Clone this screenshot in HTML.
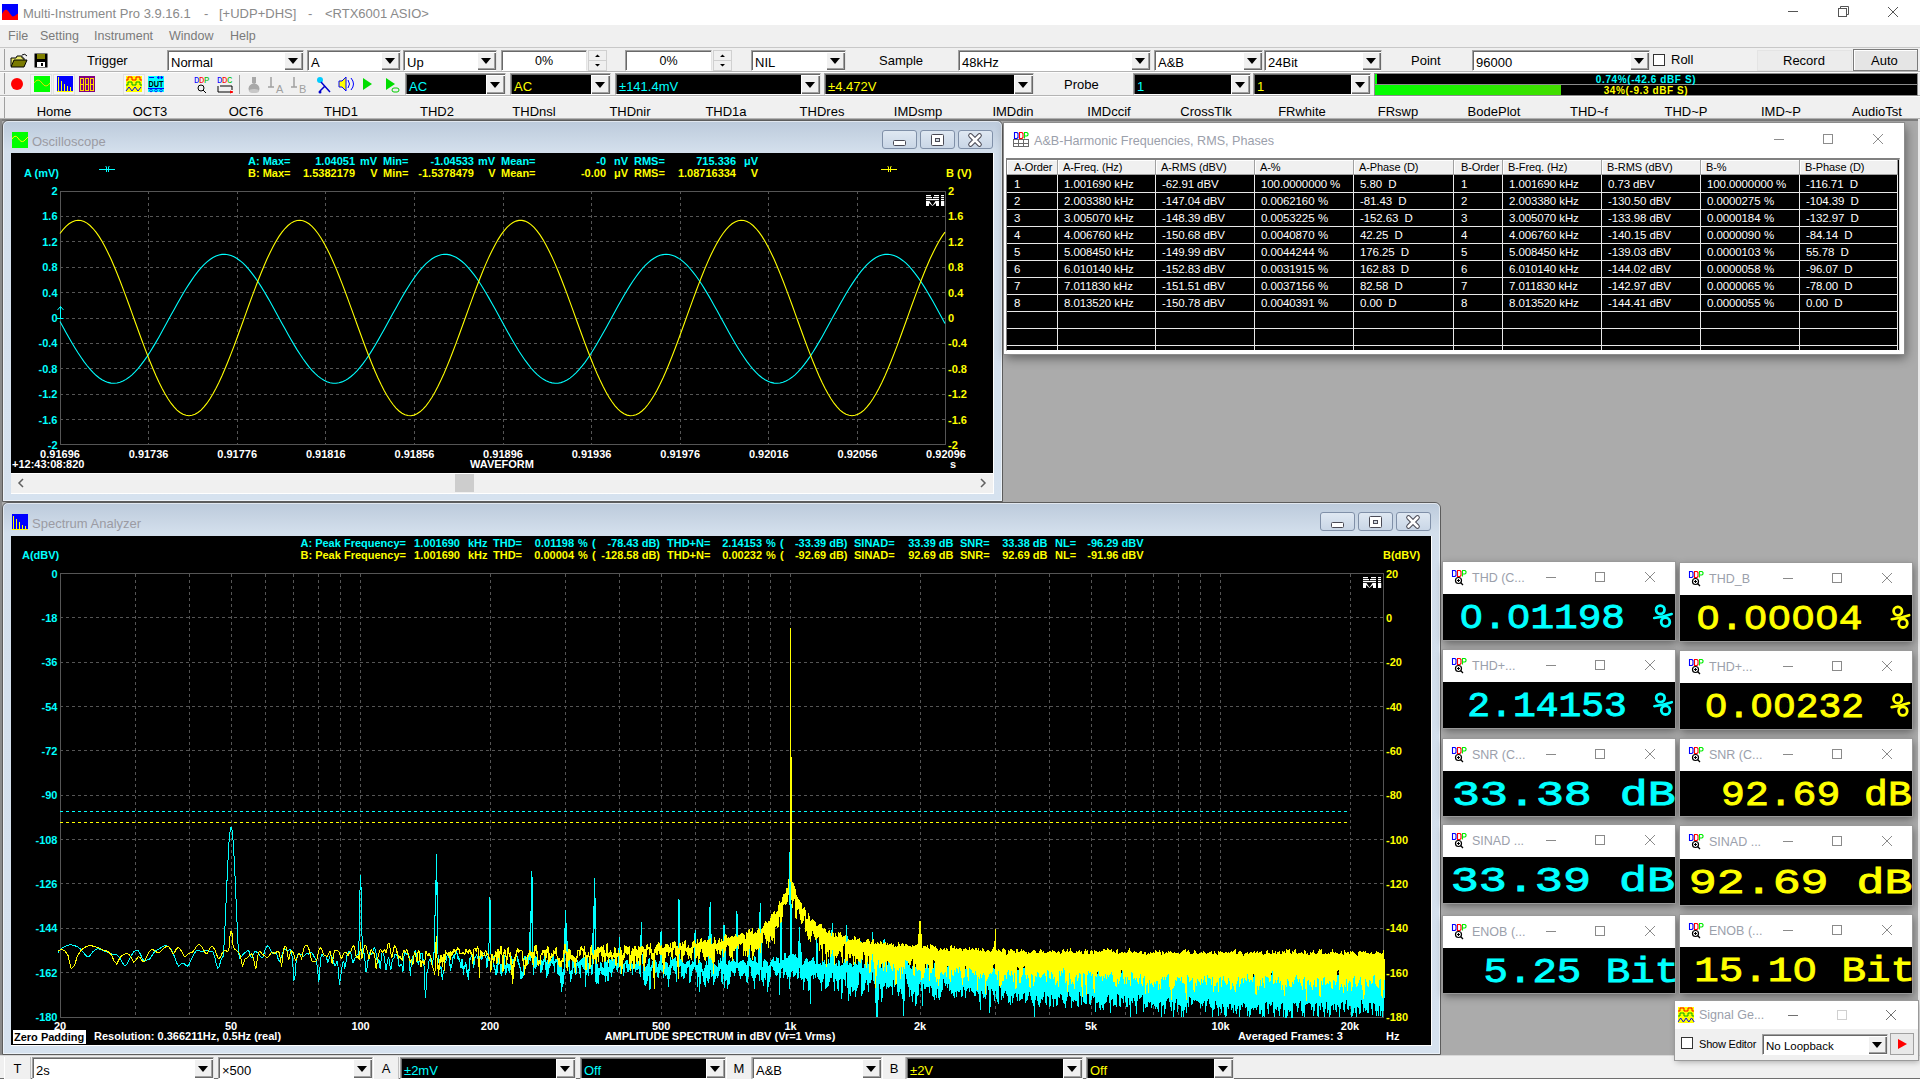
<!DOCTYPE html><html><head><meta charset="utf-8"><style>
*{margin:0;padding:0;box-sizing:border-box}
html,body{width:1920px;height:1079px;overflow:hidden;background:#ababab;font-family:"Liberation Sans",sans-serif;}
.a{position:absolute}
.t{position:absolute;white-space:pre;line-height:1}
.cb{position:absolute;background:#fff;border-top:1px solid #a0a0a0;border-left:1px solid #a0a0a0;border-bottom:1px solid #fff;border-right:1px solid #e3e3e3;box-shadow:inset 1px 1px 0 #696969}
.cbk{position:absolute;background:#000;border-top:1px solid #a0a0a0;border-left:1px solid #a0a0a0;border-bottom:1px solid #fff;border-right:1px solid #e3e3e3;box-shadow:inset 1px 1px 0 #696969}
.dd{position:absolute;top:1px;bottom:0;right:0;width:19px;background:#f0f0f0;box-shadow:inset 1px 1px 0 #fff,inset -1px -1px 0 #696969,inset -2px -2px 0 #a0a0a0}
.dd:after{content:"";position:absolute;left:4px;top:50%;margin-top:-3px;border-left:5px solid transparent;border-right:5px solid transparent;border-top:6px solid #000}
.ui{font-size:12px;color:#000}
.bold{font-weight:bold}
</style></head><body><div class="a" style="left:0px;top:0px;width:1920px;height:25px;background:#fff"></div><svg class="a" style="left:2px;top:4px" width="16" height="16"><rect width="16" height="16" fill="#0000ff"/><path d="M0 16 V10 C1.5 7 3 5 5 6 C7 7.5 9 12 11 12.5 C13 12.5 14.5 10 16 9.5 V16 Z" fill="#ff0000"/></svg><div class="t" style="left:23px;top:7px;font-size:13px;color:#8a8a8a">Multi-Instrument Pro 3.9.16.1</div><div class="t" style="left:204px;top:7px;font-size:13px;color:#8a8a8a">-</div><div class="t" style="left:219px;top:7px;font-size:13px;color:#8a8a8a">[+UDP+DHS]</div><div class="t" style="left:308px;top:7px;font-size:13px;color:#8a8a8a">-</div><div class="t" style="left:325px;top:7px;font-size:13px;color:#8a8a8a">&lt;RTX6001 ASIO&gt;</div><svg class="a" style="left:1780px;top:0" width="140" height="25"><path d="M8 11.5 H18" stroke="#555" stroke-width="1"/><rect x="58.5" y="8.5" width="8" height="8" fill="none" stroke="#555"/><path d="M60.5 8.5 V6.5 H68.5 V14.5 H66.5" fill="none" stroke="#555"/><path d="M108 7 L118 17 M118 7 L108 17" stroke="#555" stroke-width="1"/></svg><div class="a" style="left:0px;top:25px;width:1920px;height:22px;background:#f0f0f0"></div><div class="t" style="left:8px;top:30px;font-size:12.5px;color:#7a7a7a">File</div><div class="t" style="left:40px;top:30px;font-size:12.5px;color:#7a7a7a">Setting</div><div class="t" style="left:94px;top:30px;font-size:12.5px;color:#7a7a7a">Instrument</div><div class="t" style="left:169px;top:30px;font-size:12.5px;color:#7a7a7a">Window</div><div class="t" style="left:230px;top:30px;font-size:12.5px;color:#7a7a7a">Help</div><div class="a" style="left:0px;top:47px;width:1920px;height:1px;background:#c8c8c8"></div><div class="a" style="left:0px;top:48px;width:1920px;height:71px;background:#f0f0f0"></div><div class="a" style="left:0px;top:71px;width:1920px;height:1px;background:#b4b4b4"></div><div class="a" style="left:0px;top:72px;width:1920px;height:1px;background:#fdfdfd"></div><div class="a" style="left:0px;top:95px;width:1920px;height:1px;background:#b4b4b4"></div><div class="a" style="left:0px;top:96px;width:1920px;height:1px;background:#fdfdfd"></div><div class="a" style="left:0px;top:118px;width:1920px;height:1px;background:#b4b4b4"></div><div class="a" style="left:0px;top:119px;width:1920px;height:1px;background:#fdfdfd"></div><div class="a" style="left:4px;top:49px;width:1px;height:21px;background:#a0a0a0"></div><div class="a" style="left:4px;top:73px;width:1px;height:21px;background:#a0a0a0"></div><div class="a" style="left:4px;top:97px;width:1px;height:21px;background:#a0a0a0"></div><svg class="a" style="left:10px;top:52px" width="40" height="17"><path d="M1 6 H6 L7 4 H12 V6 H14 V14 H1 Z" fill="#e8e86a" stroke="#000" stroke-width="1"/><path d="M1 15 L4 8 H17 L14 15 Z" fill="#7a7a00" stroke="#000" stroke-width="1"/><path d="M12 3 Q15 1 17 4" fill="none" stroke="#000"/><rect x="24.5" y="1.5" width="13" height="14" fill="#000"/><rect x="27" y="2" width="8" height="5" fill="#808000"/><rect x="27" y="10" width="8" height="5" fill="#fff"/><rect x="31" y="11" width="2" height="3" fill="#000"/></svg><div class="t" style="left:87px;top:54px;font-size:13px;color:#000">Trigger</div><div class="cb" style="left:167px;top:50px;width:137px;height:21px"><div class="t" style="left:3px;top:5.0px;font-size:13px;color:#000">Normal</div><div class="dd"></div></div><div class="cb" style="left:307px;top:50px;width:94px;height:21px"><div class="t" style="left:3px;top:5.0px;font-size:13px;color:#000">A</div><div class="dd"></div></div><div class="cb" style="left:403px;top:50px;width:94px;height:21px"><div class="t" style="left:3px;top:5.0px;font-size:13px;color:#000">Up</div><div class="dd"></div></div><div class="cb" style="left:501px;top:50px;width:86px;height:21px"><div class="t" style="left:0;width:84px;text-align:center;top:4px;font-size:12.5px">0%</div></div><svg class="a" style="left:588px;top:50px" width="19" height="21"><rect x="0.5" y="0.5" width="18" height="10" fill="#f0f0f0" stroke="#d0d0d0"/><rect x="0.5" y="10.5" width="18" height="10" fill="#f0f0f0" stroke="#d0d0d0"/><path d="M7 7 L9.5 4.5 L12 7Z M7 14 L9.5 16.5 L12 14Z" fill="#000"/></svg><div class="cb" style="left:625px;top:50px;width:87px;height:21px"><div class="t" style="left:0;width:85px;text-align:center;top:4px;font-size:12.5px">0%</div></div><svg class="a" style="left:713px;top:50px" width="19" height="21"><rect x="0.5" y="0.5" width="18" height="10" fill="#f0f0f0" stroke="#d0d0d0"/><rect x="0.5" y="10.5" width="18" height="10" fill="#f0f0f0" stroke="#d0d0d0"/><path d="M7 7 L9.5 4.5 L12 7Z M7 14 L9.5 16.5 L12 14Z" fill="#000"/></svg><div class="cb" style="left:751px;top:50px;width:95px;height:21px"><div class="t" style="left:3px;top:5.0px;font-size:13px;color:#000">NIL</div><div class="dd"></div></div><div class="t" style="left:879px;top:54px;font-size:13px;color:#000">Sample</div><div class="cb" style="left:958px;top:50px;width:193px;height:21px"><div class="t" style="left:3px;top:5.0px;font-size:13px;color:#000">48kHz</div><div class="dd"></div></div><div class="cb" style="left:1154px;top:50px;width:109px;height:21px"><div class="t" style="left:3px;top:5.0px;font-size:13px;color:#000">A&amp;B</div><div class="dd"></div></div><div class="cb" style="left:1264px;top:50px;width:118px;height:21px"><div class="t" style="left:3px;top:5.0px;font-size:13px;color:#000">24Bit</div><div class="dd"></div></div><div class="t" style="left:1411px;top:54px;font-size:13px;color:#000">Point</div><div class="cb" style="left:1472px;top:50px;width:178px;height:21px"><div class="t" style="left:3px;top:5.0px;font-size:13px;color:#000">96000</div><div class="dd"></div></div><div class="a" style="left:1653px;top:54px;width:12px;height:12px;background:#fff;border:1px solid #333"></div><div class="t" style="left:1671px;top:53px;font-size:13px;color:#000">Roll</div><div class="a" style="left:1757px;top:50px;width:95px;height:21px;background:#ececec;border:1px solid #e4e4e4"></div><div class="t" style="left:1783px;top:54px;font-size:13px;color:#000">Record</div><div class="a" style="left:1853px;top:49px;width:65px;height:22px;background:#e5e5e5;border:1px solid #7a7a7a;box-shadow:inset 1px 1px 0 #fff"></div><div class="t" style="left:1871px;top:54px;font-size:13px;color:#000">Auto</div><svg class="a" style="left:0;top:73px" width="405" height="23"><circle cx="17" cy="11" r="6" fill="#ff0000"/><rect x="30.5" y="1.5" width="21" height="20" fill="#f5f5f5" stroke="#e0e0e0"/><rect x="53.5" y="1.5" width="21" height="20" fill="#f5f5f5" stroke="#e0e0e0"/><rect x="34" y="3" width="16" height="16" fill="#00ff00"/><path d="M34 10 Q38 4 42 10 Q46 16 50 10" fill="none" stroke="#e0e000" stroke-width="1"/><rect x="57" y="3" width="16" height="16" fill="#0000ff"/><path d="M58.5 4 V18 M61.5 8 V18 M64.5 11 V18 M67.5 13 V18 M70.5 14 V18 M57 18.5 H73" stroke="#ffff00" stroke-width="1"/><rect x="79" y="3" width="16" height="16" fill="#800080"/><path d="M80.5 5.5 h3 v12 h-3 z M80.5 11.5 h3 M85.5 5.5 h3 v12 h-3 z M85.5 11.5 h3 M90.5 5.5 h3 v12 h-3 z M90.5 11.5 h3" fill="none" stroke="#ffd700" stroke-width="1" shape-rendering="crispEdges"/><rect x="123.5" y="1.5" width="21" height="20" fill="#f5f5f5" stroke="#e0e0e0"/><rect x="126" y="3" width="16" height="16" fill="#ffff00"/><path d="M126 7 h2 v-3 h4 v3 h4 v-3 h4 v3 h2" fill="none" stroke="#ff0000"/><path d="M126 12 h2 v-3 h4 v3 h4 v-3 h4 v3 h2" fill="none" stroke="#00aa00"/><path d="M126 18 l3 -4 l3 4 l3 -4 l3 4 l3 -4" fill="none" stroke="#0000ff"/><rect x="148" y="3" width="16" height="16" fill="#00ffff"/><path d="M149 4.5 h5 M157 4.5 l2 -1 v2 z M163 4.5 l-2 -1 v2z" stroke="#0000ff" fill="#0000ff" stroke-width="1"/><text x="148.5" y="13.5" font-family="Liberation Sans" font-weight="bold" font-size="8.5" fill="#000" textLength="15" lengthAdjust="spacingAndGlyphs">DUT</text><path d="M148 15.5 h16" stroke="#0000ff"/><circle cx="151" cy="17.5" r="1.3" fill="none" stroke="#0000ff" stroke-width="0.8"/><circle cx="156" cy="17.5" r="1.3" fill="none" stroke="#0000ff" stroke-width="0.8"/><circle cx="161" cy="17.5" r="1.3" fill="none" stroke="#0000ff" stroke-width="0.8"/><text x="194" y="10" font-family="Liberation Mono" font-size="9" fill="#0000ff">D</text><text x="199" y="10" font-family="Liberation Mono" font-size="9" fill="#ff0000">D</text><text x="204" y="10" font-family="Liberation Mono" font-size="9" fill="#00bb00">P</text><circle cx="201" cy="15" r="3" fill="none" stroke="#000"/><path d="M203 17 l3 3" stroke="#000"/><text x="217" y="10" font-family="Liberation Mono" font-size="9" fill="#0000ff">D</text><text x="222" y="10" font-family="Liberation Mono" font-size="9" fill="#ff0000">D</text><text x="227" y="10" font-family="Liberation Mono" font-size="9" fill="#00bb00">C</text><path d="M218 13 v6 h14 M220 13 h12 v4" fill="none" stroke="#000"/><path d="M230 18 l3 1 l-3 1" fill="#ff0000" stroke="#ff0000"/><rect x="239" y="2" width="1" height="19" fill="#a0a0a0"/><path d="M249 18 Q247 12 254 10 Q261 12 259 18 Z" fill="#a8a8a8"/><rect x="252" y="4" width="4" height="6" fill="#a8a8a8"/><ellipse cx="254" cy="18" rx="5" ry="2" fill="#c8c8c8"/><path d="M271 4 v10 M268 14 h6" stroke="#a0a0a0" stroke-width="1.5"/><text x="276" y="20" font-family="Liberation Sans" font-size="11" fill="#a0a0a0">A</text><path d="M294 4 v10 M291 14 h6" stroke="#a0a0a0" stroke-width="1.5"/><text x="299" y="20" font-family="Liberation Sans" font-size="11" fill="#a0a0a0">B</text><circle cx="320" cy="7" r="3" fill="#00ccff"/><path d="M321 9 L330 19 M325 13 L320 18" stroke="#0000cc" stroke-width="1.5"/><circle cx="320" cy="19" r="1.5" fill="#0000cc"/><path d="M339 8 h3 l4 -4 v14 l-4 -4 h-3 z" fill="#ffff00" stroke="#0000ff"/><path d="M348 7 q3 4 0 8 M351 5 q5 6 0 12" fill="none" stroke="#0000ff"/><path d="M363 5 L372 11 L363 17 Z" fill="#00dd00"/><path d="M386 5 L395 11 L386 17 Z" fill="#00dd00"/><rect x="392" y="15" width="7" height="4" rx="2" fill="none" stroke="#00cc00"/></svg><div class="cbk" style="left:405px;top:73px;width:101px;height:22px"><div class="t" style="left:3px;top:5.5px;font-size:13px;color:#00ffff">AC</div><div class="dd"></div></div><div class="cbk" style="left:510px;top:73px;width:101px;height:22px"><div class="t" style="left:3px;top:5.5px;font-size:13px;color:#ffff00">AC</div><div class="dd"></div></div><div class="cbk" style="left:615px;top:73px;width:206px;height:22px"><div class="t" style="left:3px;top:5.5px;font-size:13px;color:#00ffff">±141.4mV</div><div class="dd"></div></div><div class="cbk" style="left:824px;top:73px;width:210px;height:22px"><div class="t" style="left:3px;top:5.5px;font-size:13px;color:#ffff00">±4.472V</div><div class="dd"></div></div><div class="t" style="left:1064px;top:78px;font-size:13px;color:#000">Probe</div><div class="cbk" style="left:1133px;top:73px;width:118px;height:22px"><div class="t" style="left:3px;top:5.5px;font-size:13px;color:#00ffff">1</div><div class="dd"></div></div><div class="cbk" style="left:1253px;top:73px;width:118px;height:22px"><div class="t" style="left:3px;top:5.5px;font-size:13px;color:#ffff00">1</div><div class="dd"></div></div><div class="a" style="left:1374px;top:73px;width:544px;height:23px;background:#000;border:1px solid #8c8c8c"></div><div class="a" style="left:1375px;top:84px;width:542px;height:1px;background:#8c8c8c"></div><div class="a" style="left:1375px;top:74px;width:2px;height:10px;background:#00ff00"></div><div class="a" style="left:1375px;top:85px;width:186px;height:10px;background:linear-gradient(90deg,#00ff00,#44dd00)"></div><div class="t" style="left:1374px;top:75px;width:544px;text-align:center;font-size:10px;letter-spacing:0.6px;font-weight:bold;color:#00ffff">0.74%(-42.6 dBF S)</div><div class="t" style="left:1374px;top:86px;width:544px;text-align:center;font-size:10px;letter-spacing:0.6px;font-weight:bold;color:#ffff00">34%(-9.3 dBF S)</div><div class="t" style="left:4px;top:105px;width:100px;text-align:center;font-size:13px;color:#000">Home</div><div class="t" style="left:100px;top:105px;width:100px;text-align:center;font-size:13px;color:#000">OCT3</div><div class="t" style="left:196px;top:105px;width:100px;text-align:center;font-size:13px;color:#000">OCT6</div><div class="t" style="left:291px;top:105px;width:100px;text-align:center;font-size:13px;color:#000">THD1</div><div class="t" style="left:387px;top:105px;width:100px;text-align:center;font-size:13px;color:#000">THD2</div><div class="t" style="left:484px;top:105px;width:100px;text-align:center;font-size:13px;color:#000">THDnsl</div><div class="t" style="left:580px;top:105px;width:100px;text-align:center;font-size:13px;color:#000">THDnir</div><div class="t" style="left:676px;top:105px;width:100px;text-align:center;font-size:13px;color:#000">THD1a</div><div class="t" style="left:772px;top:105px;width:100px;text-align:center;font-size:13px;color:#000">THDres</div><div class="t" style="left:868px;top:105px;width:100px;text-align:center;font-size:13px;color:#000">IMDsmp</div><div class="t" style="left:963px;top:105px;width:100px;text-align:center;font-size:13px;color:#000">IMDdin</div><div class="t" style="left:1059px;top:105px;width:100px;text-align:center;font-size:13px;color:#000">IMDccif</div><div class="t" style="left:1156px;top:105px;width:100px;text-align:center;font-size:13px;color:#000">CrossTlk</div><div class="t" style="left:1252px;top:105px;width:100px;text-align:center;font-size:13px;color:#000">FRwhite</div><div class="t" style="left:1348px;top:105px;width:100px;text-align:center;font-size:13px;color:#000">FRswp</div><div class="t" style="left:1444px;top:105px;width:100px;text-align:center;font-size:13px;color:#000">BodePlot</div><div class="t" style="left:1539px;top:105px;width:100px;text-align:center;font-size:13px;color:#000">THD~f</div><div class="t" style="left:1636px;top:105px;width:100px;text-align:center;font-size:13px;color:#000">THD~P</div><div class="t" style="left:1731px;top:105px;width:100px;text-align:center;font-size:13px;color:#000">IMD~P</div><div class="t" style="left:1827px;top:105px;width:100px;text-align:center;font-size:13px;color:#000">AudioTst</div><div class="a" style="left:0px;top:119px;width:1920px;height:936px;background:#ababab"></div><div class="a" style="left:0px;top:119px;width:1920px;height:2px;background:#7c7c7c"></div><div class="a" style="left:0px;top:119px;width:2px;height:936px;background:#8a8a8a"></div><div class="a" style="left:1918px;top:119px;width:2px;height:936px;background:#e8e8e8"></div><div class="a" style="left:2px;top:120px;width:1001px;height:382px;background:linear-gradient(180deg,#bccadb 0px,#d3dfec 30px,#d6e2ef 100%);border:1px solid #5c5c5c;border-radius:6px 6px 0 0"></div><div class="a" style="left:3px;top:121px;width:999px;height:380px;border:1px solid rgba(255,255,255,0.55);border-radius:5px 5px 0 0"></div><svg class="a" style="left:12px;top:132px" width="16" height="16"><rect width="16" height="16" fill="#00ff00"/><path d="M0 7 Q3 2 6 6 Q9 11 12 9 L16 5" fill="none" stroke="#ffff00" stroke-width="1"/></svg><div class="t" style="left:32px;top:135px;font-size:13px;color:#9b9ba3">Oscilloscope</div><div class="a" style="left:958px;top:130px;width:35px;height:19px;border:1px solid #8090a8;border-radius:3px;background:linear-gradient(180deg,#dfe8f2,#c9d6e6)"></div><svg class="a" style="left:966px;top:131px" width="18" height="18"><path d="M4.5 4.5 L13.5 13.5 M13.5 4.5 L4.5 13.5" stroke="#4a4a55" stroke-width="4.6" stroke-linecap="round"/><path d="M4.5 4.5 L13.5 13.5 M13.5 4.5 L4.5 13.5" stroke="#fff" stroke-width="2.6" stroke-linecap="round"/></svg><div class="a" style="left:920px;top:130px;width:35px;height:19px;border:1px solid #8090a8;border-radius:3px;background:linear-gradient(180deg,#dfe8f2,#c9d6e6)"></div><svg class="a" style="left:928px;top:131px" width="18" height="18"><rect x="3.5" y="3.5" width="12" height="11" rx="1" fill="#fff" stroke="#4a4a55" stroke-width="1"/><rect x="7.5" y="7.5" width="4" height="3" fill="#d0d8e0" stroke="#4a4a55"/></svg><div class="a" style="left:882px;top:130px;width:35px;height:19px;border:1px solid #8090a8;border-radius:3px;background:linear-gradient(180deg,#dfe8f2,#c9d6e6)"></div><svg class="a" style="left:890px;top:131px" width="18" height="18"><rect x="3.5" y="9.5" width="12" height="5" rx="1" fill="#fff" stroke="#4a4a55" stroke-width="1"/></svg><div class="a" style="left:11px;top:153px;width:982px;height:320px;background:#000"></div><div class="a" style="left:11px;top:473px;width:982px;height:20px;background:#f0f0f0;border-top:1px solid #fff"></div><svg class="a" style="left:11px;top:473px" width="982" height="20"><path d="M12 6 L8 10 L12 14" fill="none" stroke="#606060" stroke-width="1.5"/><path d="M970 6 L974 10 L970 14" fill="none" stroke="#606060" stroke-width="1.5"/><rect x="444" y="1" width="19" height="18" fill="#cdcdcd"/></svg><div class="a" style="left:993px;top:153px;width:1px;height:341px;background:#fff"></div><div class="a" style="left:11px;top:493px;width:983px;height:1px;background:#fff"></div><div class="a" style="left:2px;top:502px;width:1439px;height:553px;background:linear-gradient(180deg,#bccadb 0px,#d3dfec 30px,#d6e2ef 100%);border:1px solid #5c5c5c;border-radius:6px 6px 0 0"></div><div class="a" style="left:3px;top:503px;width:1437px;height:551px;border:1px solid rgba(255,255,255,0.55);border-radius:5px 5px 0 0"></div><svg class="a" style="left:12px;top:514px" width="16" height="16"><rect width="16" height="16" fill="#0000ff"/><path d="M1.5 2 V15 M4.5 5 V15 M7.5 8 V15 M10.5 11 V15 M13.5 12 V15 M0 15.5 H16" stroke="#ffff00" stroke-width="1"/></svg><div class="t" style="left:32px;top:517px;font-size:13px;color:#9b9ba3">Spectrum Analyzer</div><div class="a" style="left:1396px;top:512px;width:35px;height:19px;border:1px solid #8090a8;border-radius:3px;background:linear-gradient(180deg,#dfe8f2,#c9d6e6)"></div><svg class="a" style="left:1404px;top:513px" width="18" height="18"><path d="M4.5 4.5 L13.5 13.5 M13.5 4.5 L4.5 13.5" stroke="#4a4a55" stroke-width="4.6" stroke-linecap="round"/><path d="M4.5 4.5 L13.5 13.5 M13.5 4.5 L4.5 13.5" stroke="#fff" stroke-width="2.6" stroke-linecap="round"/></svg><div class="a" style="left:1358px;top:512px;width:35px;height:19px;border:1px solid #8090a8;border-radius:3px;background:linear-gradient(180deg,#dfe8f2,#c9d6e6)"></div><svg class="a" style="left:1366px;top:513px" width="18" height="18"><rect x="3.5" y="3.5" width="12" height="11" rx="1" fill="#fff" stroke="#4a4a55" stroke-width="1"/><rect x="7.5" y="7.5" width="4" height="3" fill="#d0d8e0" stroke="#4a4a55"/></svg><div class="a" style="left:1320px;top:512px;width:35px;height:19px;border:1px solid #8090a8;border-radius:3px;background:linear-gradient(180deg,#dfe8f2,#c9d6e6)"></div><svg class="a" style="left:1328px;top:513px" width="18" height="18"><rect x="3.5" y="9.5" width="12" height="5" rx="1" fill="#fff" stroke="#4a4a55" stroke-width="1"/></svg><div class="a" style="left:11px;top:536px;width:1420px;height:509px;background:#000"></div><div class="a" style="left:11px;top:1045px;width:1421px;height:1px;background:#fff"></div><div class="a" style="left:1431px;top:536px;width:1px;height:510px;background:#fff"></div><div class="a" style="left:0px;top:1055px;width:1920px;height:24px;background:#f0f0f0"></div><div class="a" style="left:0px;top:1055px;width:1920px;height:1px;background:#d8d8d8"></div><div class="a" style="left:0px;top:1078px;width:1920px;height:1px;background:#6e6e6e"></div><svg class="a" style="left:0;top:0" width="1920" height="1079" font-family="Liberation Sans"><path d="M148.6 191 V445 M237.2 191 V445 M325.8 191 V445 M414.4 191 V445 M503.0 191 V445 M591.6 191 V445 M680.2 191 V445 M768.8 191 V445 M857.4 191 V445 M60 216.4 H946 M60 241.8 H946 M60 267.2 H946 M60 292.6 H946 M60 318.0 H946 M60 343.4 H946 M60 368.8 H946 M60 394.2 H946 M60 419.6 H946" stroke="#555555" stroke-width="1" stroke-dasharray="3 3" fill="none" shape-rendering="crispEdges"/><rect x="60.5" y="191.5" width="885" height="253" fill="none" stroke="#555555" stroke-width="1" shape-rendering="crispEdges"/><text x="57.5" y="195.0" fill="#00ffff" text-anchor="end" font-size="11" font-weight="bold" >2</text><text x="948" y="195.0" fill="#ffff00" text-anchor="start" font-size="11" font-weight="bold" >2</text><text x="57.5" y="220.4" fill="#00ffff" text-anchor="end" font-size="11" font-weight="bold" >1.6</text><text x="948" y="220.4" fill="#ffff00" text-anchor="start" font-size="11" font-weight="bold" >1.6</text><text x="57.5" y="245.8" fill="#00ffff" text-anchor="end" font-size="11" font-weight="bold" >1.2</text><text x="948" y="245.8" fill="#ffff00" text-anchor="start" font-size="11" font-weight="bold" >1.2</text><text x="57.5" y="271.2" fill="#00ffff" text-anchor="end" font-size="11" font-weight="bold" >0.8</text><text x="948" y="271.2" fill="#ffff00" text-anchor="start" font-size="11" font-weight="bold" >0.8</text><text x="57.5" y="296.6" fill="#00ffff" text-anchor="end" font-size="11" font-weight="bold" >0.4</text><text x="948" y="296.6" fill="#ffff00" text-anchor="start" font-size="11" font-weight="bold" >0.4</text><text x="57.5" y="322.0" fill="#00ffff" text-anchor="end" font-size="11" font-weight="bold" >0</text><text x="948" y="322.0" fill="#ffff00" text-anchor="start" font-size="11" font-weight="bold" >0</text><text x="57.5" y="347.4" fill="#00ffff" text-anchor="end" font-size="11" font-weight="bold" >-0.4</text><text x="948" y="347.4" fill="#ffff00" text-anchor="start" font-size="11" font-weight="bold" >-0.4</text><text x="57.5" y="372.8" fill="#00ffff" text-anchor="end" font-size="11" font-weight="bold" >-0.8</text><text x="948" y="372.8" fill="#ffff00" text-anchor="start" font-size="11" font-weight="bold" >-0.8</text><text x="57.5" y="398.2" fill="#00ffff" text-anchor="end" font-size="11" font-weight="bold" >-1.2</text><text x="948" y="398.2" fill="#ffff00" text-anchor="start" font-size="11" font-weight="bold" >-1.2</text><text x="57.5" y="423.6" fill="#00ffff" text-anchor="end" font-size="11" font-weight="bold" >-1.6</text><text x="948" y="423.6" fill="#ffff00" text-anchor="start" font-size="11" font-weight="bold" >-1.6</text><text x="57.5" y="449.0" fill="#00ffff" text-anchor="end" font-size="11" font-weight="bold" >-2</text><text x="948" y="449.0" fill="#ffff00" text-anchor="start" font-size="11" font-weight="bold" >-2</text><text x="60.0" y="458" fill="#ffffff" text-anchor="middle" font-size="11" font-weight="bold" >0.91696</text><text x="148.6" y="458" fill="#ffffff" text-anchor="middle" font-size="11" font-weight="bold" >0.91736</text><text x="237.2" y="458" fill="#ffffff" text-anchor="middle" font-size="11" font-weight="bold" >0.91776</text><text x="325.8" y="458" fill="#ffffff" text-anchor="middle" font-size="11" font-weight="bold" >0.91816</text><text x="414.4" y="458" fill="#ffffff" text-anchor="middle" font-size="11" font-weight="bold" >0.91856</text><text x="503.0" y="458" fill="#ffffff" text-anchor="middle" font-size="11" font-weight="bold" >0.91896</text><text x="591.6" y="458" fill="#ffffff" text-anchor="middle" font-size="11" font-weight="bold" >0.91936</text><text x="680.2" y="458" fill="#ffffff" text-anchor="middle" font-size="11" font-weight="bold" >0.91976</text><text x="768.8" y="458" fill="#ffffff" text-anchor="middle" font-size="11" font-weight="bold" >0.92016</text><text x="857.4" y="458" fill="#ffffff" text-anchor="middle" font-size="11" font-weight="bold" >0.92056</text><text x="946.0" y="458" fill="#ffffff" text-anchor="middle" font-size="11" font-weight="bold" >0.92096</text><text x="12" y="468" fill="#ffffff" text-anchor="start" font-size="11" font-weight="bold" >+12:43:08:820</text><text x="502" y="468" fill="#ffffff" text-anchor="middle" font-size="11" font-weight="bold" >WAVEFORM</text><text x="950" y="468" fill="#ffffff" text-anchor="start" font-size="11" font-weight="bold" >s</text><text x="24" y="177" fill="#00ffff" text-anchor="start" font-size="11" font-weight="bold" >A (mV)</text><text x="946" y="177" fill="#ffff00" text-anchor="start" font-size="11" font-weight="bold" >B (V)</text><text x="248" y="165" fill="#00ffff" text-anchor="start" font-size="11" font-weight="bold" >A: Max=</text><text x="355" y="165" fill="#00ffff" text-anchor="end" font-size="11" font-weight="bold" >1.04051</text><text x="360" y="165" fill="#00ffff" text-anchor="start" font-size="11" font-weight="bold" >mV</text><text x="383" y="165" fill="#00ffff" text-anchor="start" font-size="11" font-weight="bold" >Min=</text><text x="474" y="165" fill="#00ffff" text-anchor="end" font-size="11" font-weight="bold" >-1.04533</text><text x="478" y="165" fill="#00ffff" text-anchor="start" font-size="11" font-weight="bold" >mV</text><text x="501" y="165" fill="#00ffff" text-anchor="start" font-size="11" font-weight="bold" >Mean=</text><text x="606" y="165" fill="#00ffff" text-anchor="end" font-size="11" font-weight="bold" >-0</text><text x="614" y="165" fill="#00ffff" text-anchor="start" font-size="11" font-weight="bold" >nV</text><text x="634" y="165" fill="#00ffff" text-anchor="start" font-size="11" font-weight="bold" >RMS=</text><text x="736" y="165" fill="#00ffff" text-anchor="end" font-size="11" font-weight="bold" >715.336</text><text x="744" y="165" fill="#00ffff" text-anchor="start" font-size="11" font-weight="bold" >μV</text><text x="248" y="177" fill="#ffff00" text-anchor="start" font-size="11" font-weight="bold" >B: Max=</text><text x="355" y="177" fill="#ffff00" text-anchor="end" font-size="11" font-weight="bold" >1.5382179</text><text x="377.5" y="177" fill="#ffff00" text-anchor="end" font-size="11" font-weight="bold" >V</text><text x="383" y="177" fill="#ffff00" text-anchor="start" font-size="11" font-weight="bold" >Min=</text><text x="474" y="177" fill="#ffff00" text-anchor="end" font-size="11" font-weight="bold" >-1.5378479</text><text x="495.5" y="177" fill="#ffff00" text-anchor="end" font-size="11" font-weight="bold" >V</text><text x="501" y="177" fill="#ffff00" text-anchor="start" font-size="11" font-weight="bold" >Mean=</text><text x="606" y="177" fill="#ffff00" text-anchor="end" font-size="11" font-weight="bold" >-0.00</text><text x="614" y="177" fill="#ffff00" text-anchor="start" font-size="11" font-weight="bold" >μV</text><text x="634" y="177" fill="#ffff00" text-anchor="start" font-size="11" font-weight="bold" >RMS=</text><text x="736" y="177" fill="#ffff00" text-anchor="end" font-size="11" font-weight="bold" >1.08716334</text><text x="758" y="177" fill="#ffff00" text-anchor="end" font-size="11" font-weight="bold" >V</text><path d="M99 169.5 H115 M106.5 167 V172 M108.5 167 V172 M105.5 166 L106.5 167 M109.5 166 L108.5 167" stroke="#00ffff" stroke-width="1" fill="none"/><path d="M881 169.5 H897 M888.5 167 V172 M890.5 167 V172 M887.5 166 L888.5 167 M891.5 166 L890.5 167" stroke="#ffff00" stroke-width="1" fill="none"/><rect x="926" y="195" width="5" height="1.2" fill="#fff"/><rect x="934" y="195" width="5" height="1.2" fill="#fff"/><rect x="941" y="195" width="3" height="1.2" fill="#fff"/><rect x="926" y="197" width="6" height="1.2" fill="#fff"/><rect x="933" y="197" width="6" height="1.2" fill="#fff"/><rect x="941" y="197" width="3" height="1.2" fill="#fff"/><rect x="926" y="199" width="13" height="1.2" fill="#fff"/><rect x="941" y="199" width="3" height="1.2" fill="#fff"/><path d="M926 201 h3.5 l3 4.5 l3 -4.5 h3.5 v5 h-3 v-3 l-3.5 3 l-3.5 -3 v3 h-3 z" fill="#fff"/><rect x="941" y="201" width="3.2" height="5" fill="#fff"/><polyline points="60.0,321.5 63.0,327.0 66.0,332.4 69.0,337.8 72.0,343.0 75.0,348.0 78.0,352.8 81.0,357.3 84.0,361.6 87.0,365.5 90.0,369.1 93.0,372.4 96.0,375.3 99.0,377.7 102.0,379.7 105.0,381.3 108.0,382.4 111.0,383.1 114.0,383.3 117.0,383.0 120.0,382.3 123.0,381.1 126.0,379.4 129.0,377.3 132.0,374.8 135.0,371.9 138.0,368.6 141.0,364.9 144.0,360.9 147.0,356.6 150.0,352.0 153.0,347.1 156.0,342.1 159.0,336.9 162.0,331.6 165.0,326.1 168.0,320.6 171.0,315.1 174.0,309.7 177.0,304.3 180.0,299.0 183.0,293.8 186.0,288.8 189.0,284.1 192.0,279.6 195.0,275.3 198.0,271.4 201.0,267.9 204.0,264.7 207.0,261.9 210.0,259.5 213.0,257.6 216.0,256.1 219.0,255.0 222.0,254.4 225.0,254.3 228.0,254.7 231.0,255.5 234.0,256.8 237.0,258.5 240.0,260.7 243.0,263.2 246.0,266.2 249.0,269.6 252.0,273.4 255.0,277.4 258.0,281.8 261.0,286.4 264.0,291.3 267.0,296.4 270.0,301.6 273.0,306.9 276.0,312.4 279.0,317.9 282.0,323.4 285.0,328.8 288.0,334.2 291.0,339.5 294.0,344.6 297.0,349.6 300.0,354.3 303.0,358.8 306.0,362.9 309.0,366.8 312.0,370.3 315.0,373.4 318.0,376.1 321.0,378.4 324.0,380.3 327.0,381.7 330.0,382.7 333.0,383.2 336.0,383.3 339.0,382.8 342.0,381.9 345.0,380.6 348.0,378.8 351.0,376.5 354.0,373.9 357.0,370.8 360.0,367.4 363.0,363.6 366.0,359.5 369.0,355.1 372.0,350.4 375.0,345.5 378.0,340.4 381.0,335.1 384.0,329.7 387.0,324.3 390.0,318.8 393.0,313.3 396.0,307.9 399.0,302.5 402.0,297.2 405.0,292.1 408.0,287.2 411.0,282.5 414.0,278.1 417.0,274.0 420.0,270.2 423.0,266.8 426.0,263.7 429.0,261.1 432.0,258.8 435.0,257.0 438.0,255.7 441.0,254.8 444.0,254.3 447.0,254.4 450.0,254.9 453.0,255.9 456.0,257.3 459.0,259.2 462.0,261.5 465.0,264.2 468.0,267.3 471.0,270.8 474.0,274.7 477.0,278.8 480.0,283.3 483.0,288.0 486.0,293.0 489.0,298.1 492.0,303.4 495.0,308.8 498.0,314.2 501.0,319.7 504.0,325.2 507.0,330.7 510.0,336.0 513.0,341.2 516.0,346.3 519.0,351.2 522.0,355.8 525.0,360.2 528.0,364.2 531.0,368.0 534.0,371.4 537.0,374.4 540.0,376.9 543.0,379.1 546.0,380.8 549.0,382.1 552.0,382.9 555.0,383.3 558.0,383.2 561.0,382.6 564.0,381.5 567.0,380.0 570.0,378.1 573.0,375.7 576.0,372.9 579.0,369.7 582.0,366.2 585.0,362.3 588.0,358.0 591.0,353.5 594.0,348.8 597.0,343.8 600.0,338.6 603.0,333.3 606.0,327.9 609.0,322.5 612.0,317.0 615.0,311.5 618.0,306.0 621.0,300.7 624.0,295.5 627.0,290.5 630.0,285.6 633.0,281.0 636.0,276.7 639.0,272.7 642.0,269.0 645.0,265.7 648.0,262.8 651.0,260.3 654.0,258.2 657.0,256.5 660.0,255.3 663.0,254.6 666.0,254.3 669.0,254.5 672.0,255.2 675.0,256.3 678.0,257.9 681.0,259.9 684.0,262.3 687.0,265.2 690.0,268.5 693.0,272.1 696.0,276.0 699.0,280.3 702.0,284.8 705.0,289.6 708.0,294.6 711.0,299.8 714.0,305.2 717.0,310.6 720.0,316.1 723.0,321.5 726.0,327.0 729.0,332.4 732.0,337.8 735.0,343.0 738.0,348.0 741.0,352.8 744.0,357.3 747.0,361.6 750.0,365.5 753.0,369.1 756.0,372.4 759.0,375.3 762.0,377.7 765.0,379.7 768.0,381.3 771.0,382.4 774.0,383.1 777.0,383.3 780.0,383.0 783.0,382.3 786.0,381.1 789.0,379.4 792.0,377.3 795.0,374.8 798.0,371.9 801.0,368.6 804.0,364.9 807.0,360.9 810.0,356.6 813.0,352.0 816.0,347.1 819.0,342.1 822.0,336.9 825.0,331.6 828.0,326.1 831.0,320.6 834.0,315.1 837.0,309.7 840.0,304.3 843.0,299.0 846.0,293.8 849.0,288.8 852.0,284.1 855.0,279.6 858.0,275.3 861.0,271.4 864.0,267.9 867.0,264.7 870.0,261.9 873.0,259.5 876.0,257.6 879.0,256.1 882.0,255.0 885.0,254.4 888.0,254.3 891.0,254.7 894.0,255.5 897.0,256.8 900.0,258.5 903.0,260.7 906.0,263.2 909.0,266.2 912.0,269.6 915.0,273.4 918.0,277.4 921.0,281.8 924.0,286.4 927.0,291.3 930.0,296.4 933.0,301.6 936.0,306.9 939.0,312.4 942.0,317.9 945.0,323.4" fill="none" stroke="#00ffff" stroke-width="1.1"/><polyline points="60.0,233.5 63.0,229.6 66.0,226.4 69.0,223.8 72.0,222.0 75.0,220.8 78.0,220.3 81.0,220.5 84.0,221.5 87.0,223.1 90.0,225.5 93.0,228.5 96.0,232.1 99.0,236.4 102.0,241.3 105.0,246.7 108.0,252.7 111.0,259.1 114.0,266.0 117.0,273.2 120.0,280.8 123.0,288.6 126.0,296.6 129.0,304.8 132.0,313.1 135.0,321.5 138.0,329.8 141.0,338.0 144.0,346.1 147.0,353.9 150.0,361.5 153.0,368.8 156.0,375.8 159.0,382.3 162.0,388.3 165.0,393.8 168.0,398.8 171.0,403.2 174.0,406.9 177.0,410.1 180.0,412.5 183.0,414.3 186.0,415.3 189.0,415.7 192.0,415.3 195.0,414.3 198.0,412.5 201.0,410.1 204.0,406.9 207.0,403.2 210.0,398.8 213.0,393.8 216.0,388.3 219.0,382.3 222.0,375.8 225.0,368.8 228.0,361.5 231.0,353.9 234.0,346.1 237.0,338.0 240.0,329.8 243.0,321.5 246.0,313.1 249.0,304.8 252.0,296.6 255.0,288.6 258.0,280.8 261.0,273.2 264.0,266.0 267.0,259.1 270.0,252.7 273.0,246.7 276.0,241.3 279.0,236.4 282.0,232.1 285.0,228.5 288.0,225.5 291.0,223.1 294.0,221.5 297.0,220.5 300.0,220.3 303.0,220.8 306.0,222.0 309.0,223.8 312.0,226.4 315.0,229.6 318.0,233.5 321.0,238.0 324.0,243.1 327.0,248.7 330.0,254.8 333.0,261.4 336.0,268.4 339.0,275.7 342.0,283.4 345.0,291.3 348.0,299.4 351.0,307.6 354.0,315.9 357.0,324.2 360.0,332.5 363.0,340.7 366.0,348.7 369.0,356.5 372.0,364.0 375.0,371.2 378.0,378.0 381.0,384.3 384.0,390.2 387.0,395.5 390.0,400.3 393.0,404.5 396.0,408.1 399.0,411.0 402.0,413.2 405.0,414.7 408.0,415.5 411.0,415.7 414.0,415.1 417.0,413.8 420.0,411.8 423.0,409.1 426.0,405.8 429.0,401.8 432.0,397.2 435.0,392.0 438.0,386.3 441.0,380.1 444.0,373.5 447.0,366.4 450.0,359.0 453.0,351.3 456.0,343.4 459.0,335.3 462.0,327.0 465.0,318.7 468.0,310.4 471.0,302.1 474.0,293.9 477.0,286.0 480.0,278.2 483.0,270.8 486.0,263.6 489.0,256.9 492.0,250.7 495.0,244.9 498.0,239.6 501.0,234.9 504.0,230.9 507.0,227.4 510.0,224.6 513.0,222.5 516.0,221.1 519.0,220.4 522.0,220.4 525.0,221.1 528.0,222.5 531.0,224.6 534.0,227.4 537.0,230.9 540.0,234.9 543.0,239.6 546.0,244.9 549.0,250.7 552.0,256.9 555.0,263.6 558.0,270.8 561.0,278.2 564.0,286.0 567.0,293.9 570.0,302.1 573.0,310.4 576.0,318.7 579.0,327.0 582.0,335.3 585.0,343.4 588.0,351.3 591.0,359.0 594.0,366.4 597.0,373.5 600.0,380.1 603.0,386.3 606.0,392.0 609.0,397.2 612.0,401.8 615.0,405.8 618.0,409.1 621.0,411.8 624.0,413.8 627.0,415.1 630.0,415.7 633.0,415.5 636.0,414.7 639.0,413.2 642.0,411.0 645.0,408.1 648.0,404.5 651.0,400.3 654.0,395.5 657.0,390.2 660.0,384.3 663.0,378.0 666.0,371.2 669.0,364.0 672.0,356.5 675.0,348.7 678.0,340.7 681.0,332.5 684.0,324.2 687.0,315.9 690.0,307.6 693.0,299.4 696.0,291.3 699.0,283.4 702.0,275.7 705.0,268.4 708.0,261.4 711.0,254.8 714.0,248.7 717.0,243.1 720.0,238.0 723.0,233.5 726.0,229.6 729.0,226.4 732.0,223.8 735.0,222.0 738.0,220.8 741.0,220.3 744.0,220.5 747.0,221.5 750.0,223.1 753.0,225.5 756.0,228.5 759.0,232.1 762.0,236.4 765.0,241.3 768.0,246.7 771.0,252.7 774.0,259.1 777.0,266.0 780.0,273.2 783.0,280.8 786.0,288.6 789.0,296.6 792.0,304.8 795.0,313.1 798.0,321.5 801.0,329.8 804.0,338.0 807.0,346.1 810.0,353.9 813.0,361.5 816.0,368.8 819.0,375.8 822.0,382.3 825.0,388.3 828.0,393.8 831.0,398.8 834.0,403.2 837.0,406.9 840.0,410.1 843.0,412.5 846.0,414.3 849.0,415.3 852.0,415.7 855.0,415.3 858.0,414.3 861.0,412.5 864.0,410.1 867.0,406.9 870.0,403.2 873.0,398.8 876.0,393.8 879.0,388.3 882.0,382.3 885.0,375.8 888.0,368.8 891.0,361.5 894.0,353.9 897.0,346.1 900.0,338.0 903.0,329.8 906.0,321.5 909.0,313.1 912.0,304.8 915.0,296.6 918.0,288.6 921.0,280.8 924.0,273.2 927.0,266.0 930.0,259.1 933.0,252.7 936.0,246.7 939.0,241.3 942.0,236.4 945.0,232.1" fill="none" stroke="#ffff00" stroke-width="1.1"/><path d="M60.5 318.5 V306.5 M57.5 310 L60.5 306.5 L63.5 310 M57 318.5 H63.5" fill="none" stroke="#00ffff" stroke-width="1"/></svg><svg class="a" style="left:0;top:0" width="1920" height="1079" font-family="Liberation Sans"><path d="M135.5 573.5 V1017 M189.5 573.5 V1017 M231.5 573.5 V1017 M265.5 573.5 V1017 M293.5 573.5 V1017 M318.5 573.5 V1017 M340.5 573.5 V1017 M360.5 573.5 V1017 M490.5 573.5 V1017 M565.5 573.5 V1017 M619.5 573.5 V1017 M661.5 573.5 V1017 M695.5 573.5 V1017 M723.5 573.5 V1017 M748.5 573.5 V1017 M770.5 573.5 V1017 M790.5 573.5 V1017 M920.5 573.5 V1017 M995.5 573.5 V1017 M1049.5 573.5 V1017 M1091.5 573.5 V1017 M1125.5 573.5 V1017 M1153.5 573.5 V1017 M1178.5 573.5 V1017 M1200.5 573.5 V1017 M1220.5 573.5 V1017 M1350.5 573.5 V1017 M60 617.5 H1383.5 M60 662.5 H1383.5 M60 706.5 H1383.5 M60 750.5 H1383.5 M60 795.5 H1383.5 M60 839.5 H1383.5 M60 883.5 H1383.5 M60 928.5 H1383.5 M60 972.5 H1383.5" stroke="#555555" stroke-width="1" stroke-dasharray="3 3" fill="none" shape-rendering="crispEdges"/><rect x="60.5" y="573.5" width="1322.5" height="444" fill="none" stroke="#555555" stroke-width="1" shape-rendering="crispEdges"/><path d="M60 811.5 H1350" stroke="#00ffff" stroke-dasharray="3 3" shape-rendering="crispEdges"/><path d="M60 822.5 H1350" stroke="#ffff00" stroke-dasharray="3 3" shape-rendering="crispEdges"/><text x="57.5" y="577.5" fill="#00ffff" text-anchor="end" font-size="11" font-weight="bold" >0</text><text x="1386" y="577.5" fill="#ffff00" text-anchor="start" font-size="11" font-weight="bold" >20</text><text x="57.5" y="621.85" fill="#00ffff" text-anchor="end" font-size="11" font-weight="bold" >-18</text><text x="1386" y="621.85" fill="#ffff00" text-anchor="start" font-size="11" font-weight="bold" >0</text><text x="57.5" y="666.2" fill="#00ffff" text-anchor="end" font-size="11" font-weight="bold" >-36</text><text x="1386" y="666.2" fill="#ffff00" text-anchor="start" font-size="11" font-weight="bold" >-20</text><text x="57.5" y="710.55" fill="#00ffff" text-anchor="end" font-size="11" font-weight="bold" >-54</text><text x="1386" y="710.55" fill="#ffff00" text-anchor="start" font-size="11" font-weight="bold" >-40</text><text x="57.5" y="754.9" fill="#00ffff" text-anchor="end" font-size="11" font-weight="bold" >-72</text><text x="1386" y="754.9" fill="#ffff00" text-anchor="start" font-size="11" font-weight="bold" >-60</text><text x="57.5" y="799.25" fill="#00ffff" text-anchor="end" font-size="11" font-weight="bold" >-90</text><text x="1386" y="799.25" fill="#ffff00" text-anchor="start" font-size="11" font-weight="bold" >-80</text><text x="57.5" y="843.6" fill="#00ffff" text-anchor="end" font-size="11" font-weight="bold" >-108</text><text x="1386" y="843.6" fill="#ffff00" text-anchor="start" font-size="11" font-weight="bold" >-100</text><text x="57.5" y="887.95" fill="#00ffff" text-anchor="end" font-size="11" font-weight="bold" >-126</text><text x="1386" y="887.95" fill="#ffff00" text-anchor="start" font-size="11" font-weight="bold" >-120</text><text x="57.5" y="932.3" fill="#00ffff" text-anchor="end" font-size="11" font-weight="bold" >-144</text><text x="1386" y="932.3" fill="#ffff00" text-anchor="start" font-size="11" font-weight="bold" >-140</text><text x="57.5" y="976.65" fill="#00ffff" text-anchor="end" font-size="11" font-weight="bold" >-162</text><text x="1386" y="976.65" fill="#ffff00" text-anchor="start" font-size="11" font-weight="bold" >-160</text><text x="57.5" y="1021.0" fill="#00ffff" text-anchor="end" font-size="11" font-weight="bold" >-180</text><text x="1386" y="1021.0" fill="#ffff00" text-anchor="start" font-size="11" font-weight="bold" >-180</text><text x="60.0" y="1030" fill="#ffffff" text-anchor="middle" font-size="11" font-weight="bold" >20</text><text x="231.11420372897618" y="1030" fill="#ffffff" text-anchor="middle" font-size="11" font-weight="bold" >50</text><text x="360.5571018644881" y="1030" fill="#ffffff" text-anchor="middle" font-size="11" font-weight="bold" >100</text><text x="490.0" y="1030" fill="#ffffff" text-anchor="middle" font-size="11" font-weight="bold" >200</text><text x="661.1142037289762" y="1030" fill="#ffffff" text-anchor="middle" font-size="11" font-weight="bold" >500</text><text x="790.557101864488" y="1030" fill="#ffffff" text-anchor="middle" font-size="11" font-weight="bold" >1k</text><text x="920.0" y="1030" fill="#ffffff" text-anchor="middle" font-size="11" font-weight="bold" >2k</text><text x="1091.114203728976" y="1030" fill="#ffffff" text-anchor="middle" font-size="11" font-weight="bold" >5k</text><text x="1220.557101864488" y="1030" fill="#ffffff" text-anchor="middle" font-size="11" font-weight="bold" >10k</text><text x="1350.0" y="1030" fill="#ffffff" text-anchor="middle" font-size="11" font-weight="bold" >20k</text><text x="22" y="559" fill="#00ffff" text-anchor="start" font-size="11" font-weight="bold" >A(dBV)</text><text x="1383" y="559" fill="#ffff00" text-anchor="start" font-size="11" font-weight="bold" >B(dBV)</text><rect x="13" y="1030" width="73" height="14" fill="#fff"/><text x="14" y="1041" fill="#000" text-anchor="start" font-size="11" font-weight="bold" >Zero Padding</text><text x="94" y="1040" fill="#ffffff" text-anchor="start" font-size="11" font-weight="bold" >Resolution: 0.366211Hz, 0.5Hz (real)</text><text x="720" y="1040" fill="#ffffff" text-anchor="middle" font-size="11" font-weight="bold" >AMPLITUDE SPECTRUM in dBV (Vr=1 Vrms)</text><text x="1238" y="1040" fill="#ffffff" text-anchor="start" font-size="11" font-weight="bold" >Averaged Frames: 3</text><text x="1386" y="1040" fill="#ffffff" text-anchor="start" font-size="11" font-weight="bold" >Hz</text><rect x="1363" y="577" width="5" height="1.2" fill="#fff"/><rect x="1371" y="577" width="5" height="1.2" fill="#fff"/><rect x="1378" y="577" width="3" height="1.2" fill="#fff"/><rect x="1363" y="579" width="6" height="1.2" fill="#fff"/><rect x="1370" y="579" width="6" height="1.2" fill="#fff"/><rect x="1378" y="579" width="3" height="1.2" fill="#fff"/><rect x="1363" y="581" width="13" height="1.2" fill="#fff"/><rect x="1378" y="581" width="3" height="1.2" fill="#fff"/><path d="M1363 583 h3.5 l3 4.5 l3 -4.5 h3.5 v5 h-3 v-3 l-3.5 3 l-3.5 -3 v3 h-3 z" fill="#fff"/><rect x="1378" y="583" width="3.2" height="5" fill="#fff"/><text x="300.5" y="547" fill="#00ffff" text-anchor="start" font-size="11" font-weight="bold" >A: Peak Frequency=</text><text x="460" y="547" fill="#00ffff" text-anchor="end" font-size="11" font-weight="bold" >1.001690</text><text x="468" y="547" fill="#00ffff" text-anchor="start" font-size="11" font-weight="bold" >kHz</text><text x="493" y="547" fill="#00ffff" text-anchor="start" font-size="11" font-weight="bold" >THD=</text><text x="574" y="547" fill="#00ffff" text-anchor="end" font-size="11" font-weight="bold" >0.01198</text><text x="578" y="547" fill="#00ffff" text-anchor="start" font-size="11" font-weight="bold" >%</text><text x="592" y="547" fill="#00ffff" text-anchor="start" font-size="11" font-weight="bold" >(</text><text x="660" y="547" fill="#00ffff" text-anchor="end" font-size="11" font-weight="bold" >-78.43 dB)</text><text x="667" y="547" fill="#00ffff" text-anchor="start" font-size="11" font-weight="bold" >THD+N=</text><text x="762" y="547" fill="#00ffff" text-anchor="end" font-size="11" font-weight="bold" >2.14153</text><text x="766" y="547" fill="#00ffff" text-anchor="start" font-size="11" font-weight="bold" >%</text><text x="780" y="547" fill="#00ffff" text-anchor="start" font-size="11" font-weight="bold" >(</text><text x="847.5" y="547" fill="#00ffff" text-anchor="end" font-size="11" font-weight="bold" >-33.39 dB)</text><text x="854" y="547" fill="#00ffff" text-anchor="start" font-size="11" font-weight="bold" >SINAD=</text><text x="953.5" y="547" fill="#00ffff" text-anchor="end" font-size="11" font-weight="bold" >33.39 dB</text><text x="960" y="547" fill="#00ffff" text-anchor="start" font-size="11" font-weight="bold" >SNR=</text><text x="1047.5" y="547" fill="#00ffff" text-anchor="end" font-size="11" font-weight="bold" >33.38 dB</text><text x="1055" y="547" fill="#00ffff" text-anchor="start" font-size="11" font-weight="bold" >NL=</text><text x="1143.5" y="547" fill="#00ffff" text-anchor="end" font-size="11" font-weight="bold" >-96.29 dBV</text><text x="300.5" y="559" fill="#ffff00" text-anchor="start" font-size="11" font-weight="bold" >B: Peak Frequency=</text><text x="460" y="559" fill="#ffff00" text-anchor="end" font-size="11" font-weight="bold" >1.001690</text><text x="468" y="559" fill="#ffff00" text-anchor="start" font-size="11" font-weight="bold" >kHz</text><text x="493" y="559" fill="#ffff00" text-anchor="start" font-size="11" font-weight="bold" >THD=</text><text x="574" y="559" fill="#ffff00" text-anchor="end" font-size="11" font-weight="bold" >0.00004</text><text x="578" y="559" fill="#ffff00" text-anchor="start" font-size="11" font-weight="bold" >%</text><text x="592" y="559" fill="#ffff00" text-anchor="start" font-size="11" font-weight="bold" >(</text><text x="660" y="559" fill="#ffff00" text-anchor="end" font-size="11" font-weight="bold" >-128.58 dB)</text><text x="667" y="559" fill="#ffff00" text-anchor="start" font-size="11" font-weight="bold" >THD+N=</text><text x="762" y="559" fill="#ffff00" text-anchor="end" font-size="11" font-weight="bold" >0.00232</text><text x="766" y="559" fill="#ffff00" text-anchor="start" font-size="11" font-weight="bold" >%</text><text x="780" y="559" fill="#ffff00" text-anchor="start" font-size="11" font-weight="bold" >(</text><text x="847.5" y="559" fill="#ffff00" text-anchor="end" font-size="11" font-weight="bold" >-92.69 dB)</text><text x="854" y="559" fill="#ffff00" text-anchor="start" font-size="11" font-weight="bold" >SINAD=</text><text x="953.5" y="559" fill="#ffff00" text-anchor="end" font-size="11" font-weight="bold" >92.69 dB</text><text x="960" y="559" fill="#ffff00" text-anchor="start" font-size="11" font-weight="bold" >SNR=</text><text x="1047.5" y="559" fill="#ffff00" text-anchor="end" font-size="11" font-weight="bold" >92.69 dB</text><text x="1055" y="559" fill="#ffff00" text-anchor="start" font-size="11" font-weight="bold" >NL=</text><text x="1143.5" y="559" fill="#ffff00" text-anchor="end" font-size="11" font-weight="bold" >-91.96 dBV</text><path d="M57.9 952.6 L61.3 948.7 L64.7 946.4 L68.0 945.1 L71.2 944.9 L74.4 945.5 L77.6 946.9 L80.7 949.2 L83.7 952.8 L86.7 956.4 L89.6 956.0 L92.5 952.2 L95.4 949.5 L98.2 948.6 L100.9 949.4 L103.7 950.8 L106.4 951.7 L109.0 952.6 L111.6 953.8 L114.2 954.5 L116.7 955.0 L119.2 957.0 L121.7 961.2 L124.2 965.5 L126.6 964.8 L128.9 960.6 L131.3 955.8 L133.6 951.9 L135.9 950.2 L138.2 950.7 L140.4 954.1 L142.6 959.3 L144.8 960.9 L147.0 959.9 L149.1 959.4 L151.2 956.9 L153.3 953.3 L155.3 951.1 L157.4 950.0 L159.4 948.8 L161.4 947.4 L163.4 946.2 L165.3 945.7 L167.3 946.1 L169.2 947.3 L171.1 949.5 L173.0 952.7 L174.8 957.7 L176.7 963.0 L178.5 966.1 L180.3 964.9 L182.1 963.1 L183.8 963.2 L185.6 965.0 L187.3 966.3 L189.1 964.3 L190.8 960.5 L192.5 956.9 L194.1 953.7 L195.8 951.3 L197.4 950.2 L199.1 950.6 L200.7 951.5 L202.3 951.7 L203.9 951.1 L205.4 950.8 L207.0 950.9 L208.6 951.1 L210.1 951.0 L211.6 951.0 L213.1 952.3 L214.6 956.3 L216.1 963.0 L217.6 968.5 L219.1 966.8 L220.5 961.7 L222.0 957.9 L223.4 955.8 L224.8 930.8 L226.2 898.8 L227.6 867.5 L229.0 842.3 L230.4 828.0 L231.8 827.5 L233.1 840.6 L234.5 864.3 L235.8 893.8 L237.1 924.3 L238.4 951.8 L239.8 958.0 L241.1 957.0 L242.3 955.3 L243.6 953.7 L244.9 952.8 L246.2 951.8 L247.4 950.8 L248.7 951.0 L249.9 953.3 L251.2 957.7 L252.4 957.4 L253.6 953.4 L254.8 951.6 L256.0 951.5 L257.2 952.4 L258.4 953.6 L259.6 955.2 L260.7 956.9 L261.9 958.0 L263.1 956.6 L264.2 952.8 L265.3 949.3 L266.5 946.8 L267.6 945.8 L268.7 946.5 L269.8 948.6 L271.0 951.2 L272.1 952.9 L273.1 953.2 L274.2 952.8 L275.3 952.6 L276.4 953.6 L277.5 956.7 L278.5 960.2 L279.6 961.2 L280.6 959.4 L281.7 956.2 L282.7 952.8 L283.8 950.3 L284.8 949.0 L285.8 949.3 L286.8 950.5 L287.8 951.0 L288.9 950.1 L289.9 949.5 L290.8 950.7 L291.8 954.2 L292.8 963.3 L293.8 979.9 L294.8 978.6 L295.8 964.9 L296.7 958.0 L297.7 954.9 L298.6 954.3 L299.6 954.7 L300.5 954.8 L301.5 954.8 L302.4 955.5 L303.3 956.1 L304.3 955.8 L305.2 954.8 L306.1 953.7 L307.0 953.0 L307.9 953.3 L308.8 954.2 L309.7 953.9 L310.6 952.7 L311.5 952.3 L312.4 953.3 L313.3 955.0 L314.2 956.9 L315.0 958.0 L315.9 959.9 L316.8 963.1 L317.6 968.6 L318.5 980.8 L319.4 979.1 L320.2 963.1 L321.1 955.8 L321.9 954.3 L322.7 955.3 L323.6 956.5 L324.4 955.9 L325.2 955.2 L326.1 956.2 L326.9 959.1 L327.7 961.7 L328.5 960.8 L329.3 958.0 L330.1 955.8 L330.9 955.1 L331.7 956.2 L332.5 958.7 L333.3 961.3 L334.1 963.7 L334.9 965.8 L335.7 964.7 L336.5 961.9 L337.2 961.8 L338.0 966.4 L338.8 976.6 L339.5 984.5 L340.3 979.0 L341.1 973.3 L341.8 968.0 L342.6 963.5 L343.3 961.5 L344.1 963.3 L344.8 967.7 L345.6 965.9 L346.3 958.9 L347.0 954.6 L347.8 953.1 L348.5 952.1 L349.2 951.3 L350.0 951.3 L350.7 952.5 L351.4 955.1 L352.1 959.3 L352.8 962.4 L353.5 962.0 L354.3 959.7 L355.0 958.1 L355.7 957.2 L356.4 956.2 L357.1 954.8 L357.8 954.0 L358.4 954.6 L359.1 938.7 L359.8 895.8 L360.5 875.1 L361.2 891.1 L361.9 932.0 L362.6 955.6 L363.2 953.2 L363.9 953.1 L364.6 955.8 L365.2 963.3 L365.9 971.7 L366.6 971.7 L367.2 966.5 L367.9 961.5 L368.5 956.7 L369.2 953.8 L369.9 952.3 L370.5 952.3 L371.1 953.3 L371.8 954.4 L372.4 953.5 L373.1 950.8 L373.7 948.4 L374.4 947.7 L375.0 948.7 L375.6 950.9 L376.2 954.1 L376.9 958.7 L377.5 963.6 L378.1 962.9 L378.7 959.9 L379.4 961.0 L380.0 967.8 L380.6 968.7 L381.2 958.2 L381.8 953.5 L382.4 952.5 L383.0 953.2 L383.6 954.8 L384.2 956.8 L384.8 960.8 L385.4 965.9 L386.0 970.0 L386.6 967.6 L387.2 962.4 L387.8 959.1 L388.4 957.9 L389.0 958.8 L389.6 962.3 L390.2 967.7 L390.8 970.4 L391.3 966.9 L391.9 962.1 L392.5 959.5 L393.1 959.1 L393.6 958.9 L394.2 957.2 L394.5 955 L395.5 954 L396.5 954 L397.5 958 397.5 955 L398.5 963 398.5 965 L399.5 966 L400.5 965 400.5 964 L401.5 964 L402.5 968 402.5 972 L403.5 969 403.5 961 L404.5 952 404.5 955 L405.5 953 405.5 952 L406.5 954 L407.5 954 L408.5 955 L409.5 958 409.5 965 L410.5 976 410.5 975 L411.5 960 411.5 967 L412.5 956 L413.5 956 L414.5 954 414.5 952 L415.5 951 L416.5 955 416.5 957 L417.5 963 417.5 960 L418.5 965 L419.5 958 419.5 962 L420.5 956 420.5 954 L421.5 953 L422.5 953 422.5 955 L423.5 965 423.5 959 L424.5 973 424.5 982 L425.5 998 L426.5 982 426.5 975 L427.5 969 427.5 973 L428.5 965 428.5 962 L429.5 960 429.5 961 L430.5 958 L431.5 965 431.5 960 L432.5 960 432.5 965 L433.5 956 433.5 953 L434.5 952 L435.5 880 435.5 916 L436.5 874 436.5 854 L437.5 908 437.5 945 L438.5 963 438.5 957 L439.5 969 439.5 970 L440.5 968 440.5 966 L441.5 968 441.5 973 L442.5 980 442.5 979 L443.5 970 443.5 972 L444.5 970 444.5 965 L445.5 961 445.5 963 L446.5 959 446.5 957 L447.5 955 L448.5 957 L449.5 958 449.5 960 L450.5 971 450.5 964 L451.5 964 451.5 968 L452.5 961 452.5 959 L453.5 956 L454.5 958 L455.5 951 455.5 955 L456.5 953 456.5 951 L457.5 955 457.5 958 L458.5 957 L459.5 962 459.5 958 L460.5 965 460.5 967 L461.5 967 461.5 959 L462.5 959 462.5 962 L463.5 975 463.5 968 L464.5 965 464.5 969 L465.5 964 465.5 962 L466.5 966 466.5 969 L467.5 977 467.5 972 L468.5 969 468.5 980 L469.5 963 469.5 960 L470.5 957 470.5 960 L471.5 954 L472.5 957 472.5 955 L473.5 959 473.5 968 L474.5 962 474.5 958 L475.5 957 L476.5 955 L477.5 957 477.5 958 L478.5 960 478.5 958 L479.5 956 479.5 963 L480.5 955 480.5 953 L481.5 958 481.5 960 L482.5 957 482.5 955 L483.5 953 L484.5 953 484.5 954 L485.5 958 485.5 955 L486.5 961 486.5 968 L487.5 966 487.5 962 L488.5 950 488.5 961 L489.5 925 489.5 897 L490.5 902 490.5 943 L491.5 965 491.5 957 L492.5 955 L493.5 957 493.5 964 L494.5 970 494.5 965 L495.5 973 495.5 974 L496.5 974 496.5 972 L497.5 959 497.5 973 L498.5 958 L499.5 964 499.5 959 L500.5 969 500.5 971 L501.5 976 501.5 969 L502.5 960 502.5 973 L503.5 957 503.5 955 L504.5 956 504.5 963 L505.5 975 505.5 967 L506.5 963 506.5 973 L507.5 964 507.5 963 L508.5 966 508.5 968 L509.5 973 509.5 970 L510.5 958 510.5 970 L511.5 959 511.5 956 L512.5 961 512.5 964 L513.5 962 513.5 960 L514.5 959 514.5 966 L515.5 956 515.5 955 L516.5 955 L517.5 957 517.5 958 L518.5 965 518.5 959 L519.5 966 L520.5 969 520.5 978 L521.5 978 521.5 972 L522.5 973 522.5 978 L523.5 973 523.5 961 L524.5 956 524.5 958 L525.5 961 525.5 956 L526.5 959 526.5 963 L527.5 960 527.5 956 L528.5 959 528.5 964 L529.5 957 529.5 954 L530.5 911 530.5 961 L531.5 888 531.5 871 L532.5 882 532.5 955 L533.5 975 533.5 960 L534.5 959 534.5 966 L535.5 969 535.5 957 L536.5 958 536.5 967 L537.5 963 537.5 959 L538.5 962 538.5 964 L539.5 963 539.5 960 L540.5 962 540.5 973 L541.5 970 541.5 960 L542.5 962 542.5 970 L543.5 960 L544.5 961 544.5 955 L545.5 955 545.5 961 L546.5 978 546.5 965 L547.5 960 547.5 976 L548.5 972 548.5 961 L549.5 958 549.5 968 L550.5 963 550.5 958 L551.5 961 551.5 962 L552.5 964 552.5 957 L553.5 955 553.5 960 L554.5 972 554.5 964 L555.5 959 555.5 963 L556.5 960 556.5 959 L557.5 961 557.5 973 L558.5 975 558.5 963 L559.5 965 559.5 968 L560.5 983 560.5 967 L561.5 966 561.5 992 L562.5 983 562.5 975 L563.5 969 563.5 984 L564.5 967 564.5 947 L565.5 910 565.5 929 L566.5 964 566.5 923 L567.5 958 567.5 960 L568.5 967 568.5 959 L569.5 961 569.5 966 L570.5 982 570.5 973 L571.5 970 571.5 979 L572.5 970 572.5 959 L573.5 957 573.5 963 L574.5 973 574.5 965 L575.5 971 575.5 975 L576.5 973 576.5 966 L577.5 960 577.5 963 L578.5 968 578.5 963 L579.5 962 579.5 969 L580.5 978 580.5 961 L581.5 959 581.5 962 L582.5 967 582.5 959 L583.5 958 583.5 968 L584.5 970 584.5 957 L585.5 962 585.5 987 L586.5 964 586.5 961 L587.5 957 587.5 970 L588.5 976 588.5 964 L589.5 965 589.5 968 L590.5 968 590.5 967 L591.5 966 591.5 974 L592.5 973 592.5 960 L593.5 906 593.5 963 L594.5 898 594.5 878 L595.5 916 595.5 979 L596.5 984 596.5 964 L597.5 964 597.5 982 L598.5 983 598.5 968 L599.5 968 599.5 975 L600.5 968 600.5 962 L601.5 965 601.5 972 L602.5 975 602.5 967 L603.5 969 603.5 974 L604.5 975 604.5 960 L605.5 962 605.5 982 L606.5 970 606.5 965 L607.5 960 607.5 980 L608.5 980 608.5 976 L609.5 959 609.5 970 L610.5 973 610.5 961 L611.5 959 611.5 977 L612.5 968 612.5 963 L613.5 959 613.5 969 L614.5 967 614.5 961 L615.5 958 615.5 962 L616.5 970 616.5 965 L617.5 964 617.5 972 L618.5 964 618.5 959 L619.5 937 619.5 953 L620.5 974 620.5 958 L621.5 957 621.5 971 L622.5 965 622.5 960 L623.5 968 623.5 976 L624.5 969 624.5 965 L625.5 962 L626.5 960 626.5 964 L627.5 972 627.5 960 L628.5 967 628.5 972 L629.5 967 629.5 963 L630.5 961 L631.5 959 631.5 963 L632.5 975 632.5 969 L633.5 960 633.5 967 L634.5 969 634.5 963 L635.5 965 635.5 972 L636.5 967 636.5 962 L637.5 964 637.5 969 L638.5 968 638.5 961 L639.5 965 639.5 971 L640.5 977 640.5 949 L641.5 922 641.5 942 L642.5 964 642.5 954 L643.5 960 643.5 975 L644.5 985 644.5 969 L645.5 967 645.5 986 L646.5 982 646.5 969 L647.5 964 647.5 981 L648.5 972 648.5 960 L649.5 959 649.5 990 L650.5 988 650.5 969 L651.5 965 651.5 971 L652.5 965 652.5 963 L653.5 960 653.5 969 L654.5 963 654.5 959 L655.5 961 655.5 973 L656.5 971 656.5 962 L657.5 971 657.5 976 L658.5 977 658.5 968 L659.5 961 659.5 973 L660.5 967 660.5 934 L661.5 931 661.5 970 L662.5 972 662.5 965 L663.5 969 663.5 978 L664.5 971 664.5 962 L665.5 963 665.5 976 L666.5 973 666.5 963 L667.5 964 667.5 970 L668.5 987 668.5 969 L669.5 965 669.5 979 L670.5 972 670.5 957 L671.5 963 671.5 968 L672.5 964 672.5 959 L673.5 960 673.5 969 L674.5 971 674.5 959 L675.5 957 675.5 966 L676.5 982 676.5 964 L677.5 958 677.5 965 L678.5 959 678.5 899 L679.5 901 679.5 966 L680.5 965 680.5 959 L681.5 962 681.5 977 L682.5 975 682.5 963 L683.5 964 683.5 979 L684.5 976 684.5 964 L685.5 964 685.5 971 L686.5 974 686.5 964 L687.5 961 687.5 967 L688.5 966 688.5 962 L689.5 961 689.5 982 L690.5 981 690.5 966 L691.5 965 691.5 976 L692.5 967 692.5 962 L693.5 963 693.5 969 L694.5 965 694.5 936 L695.5 930 695.5 968 L696.5 972 696.5 965 L697.5 965 697.5 987 L698.5 968 698.5 962 L699.5 961 699.5 992 L700.5 977 700.5 962 L701.5 964 701.5 968 L702.5 976 702.5 969 L703.5 973 703.5 978 L704.5 985 704.5 972 L705.5 965 705.5 987 L706.5 970 706.5 961 L707.5 968 707.5 979 L708.5 983 708.5 966 L709.5 907 709.5 979 L710.5 962 710.5 902 L711.5 964 711.5 977 L712.5 974 712.5 960 L713.5 964 713.5 985 L714.5 979 714.5 965 L715.5 966 715.5 979 L716.5 973 716.5 966 L717.5 969 717.5 978 L718.5 973 718.5 960 L719.5 965 719.5 971 L720.5 967 720.5 958 L721.5 964 721.5 980 L722.5 984 722.5 961 L723.5 925 723.5 960 L724.5 988 724.5 925 L725.5 964 725.5 981 L726.5 978 726.5 964 L727.5 966 727.5 989 L728.5 982 728.5 963 L729.5 960 729.5 984 L730.5 971 730.5 963 L731.5 961 731.5 970 L732.5 972 732.5 961 L733.5 959 733.5 970 L734.5 976 734.5 962 L735.5 963 735.5 973 L736.5 963 736.5 911 L737.5 916 737.5 964 L738.5 971 738.5 964 L739.5 963 739.5 973 L740.5 979 740.5 961 L741.5 961 741.5 975 L742.5 975 742.5 960 L743.5 960 743.5 974 L744.5 971 744.5 962 L745.5 965 745.5 969 L746.5 982 746.5 969 L747.5 961 747.5 983 L748.5 972 748.5 935 L749.5 937 749.5 965 L750.5 966 750.5 958 L751.5 962 751.5 974 L752.5 978 752.5 961 L753.5 961 753.5 972 L754.5 989 754.5 957 L755.5 958 755.5 978 L756.5 972 756.5 962 L757.5 965 757.5 973 L758.5 974 758.5 963 L759.5 912 759.5 981 L760.5 960 760.5 903 L761.5 960 761.5 978 L762.5 982 762.5 973 L763.5 961 763.5 986 L764.5 971 764.5 959 L765.5 962 765.5 980 L766.5 967 766.5 961 L767.5 964 767.5 992 L768.5 983 768.5 967 L769.5 966 769.5 982 L770.5 972 770.5 964 L771.5 960 771.5 964 L772.5 967 772.5 961 L773.5 957 773.5 969 L774.5 971 774.5 961 L775.5 961 775.5 974 L776.5 975 776.5 958 L777.5 959 777.5 975 L778.5 970 778.5 958 L779.5 967 779.5 995 L780.5 963 780.5 914 L781.5 915 781.5 969 L782.5 966 782.5 960 L783.5 960 783.5 978 L784.5 972 784.5 953 L785.5 953 785.5 968 L786.5 975 786.5 958 L787.5 958 787.5 979 L788.5 975 788.5 957 L789.5 956 789.5 989 L790.5 965 790.5 852 L791.5 954 791.5 972 L792.5 970 792.5 954 L793.5 954 793.5 977 L794.5 974 794.5 956 L795.5 955 795.5 975 L796.5 970 796.5 957 L797.5 959 797.5 979 L798.5 977 798.5 956 L799.5 927 799.5 957 L800.5 978 800.5 943 L801.5 960 801.5 979 L802.5 978 802.5 966 L803.5 964 803.5 990 L804.5 975 804.5 963 L805.5 959 805.5 977 L806.5 979 806.5 959 L807.5 960 807.5 971 L808.5 991 808.5 963 L809.5 962 809.5 975 L810.5 1004 810.5 962 L811.5 960 811.5 976 L812.5 973 812.5 959 L813.5 957 813.5 979 L814.5 971 814.5 961 L815.5 966 815.5 978 L816.5 968 816.5 935 L817.5 951 817.5 975 L818.5 979 818.5 964 L819.5 964 819.5 977 L820.5 983 820.5 963 L821.5 967 821.5 991 L822.5 974 822.5 960 L823.5 964 823.5 979 L824.5 969 824.5 960 L825.5 968 825.5 989 L826.5 987 826.5 964 L827.5 965 827.5 986 L828.5 985 828.5 959 L829.5 967 829.5 982 L830.5 975 830.5 961 L831.5 930 831.5 978 L832.5 969 832.5 923 L833.5 967 833.5 973 L834.5 991 834.5 963 L835.5 966 835.5 976 L836.5 981 836.5 963 L837.5 968 837.5 986 L838.5 991 838.5 961 L839.5 962 839.5 980 L840.5 978 840.5 967 L841.5 966 841.5 999 L842.5 987 842.5 968 L843.5 963 843.5 978 L844.5 979 844.5 959 L845.5 964 845.5 986 L846.5 959 846.5 925 L847.5 946 847.5 974 L848.5 1001 848.5 967 L849.5 963 849.5 991 L850.5 996 850.5 963 L851.5 965 851.5 982 L852.5 992 852.5 968 L853.5 967 853.5 990 L854.5 989 854.5 963 L855.5 964 855.5 997 L856.5 985 856.5 964 L857.5 966 857.5 988 L858.5 982 858.5 961 L859.5 940 859.5 970 L860.5 974 860.5 941 L861.5 966 861.5 996 L862.5 992 862.5 968 L863.5 968 863.5 990 L864.5 989 864.5 966 L865.5 962 865.5 983 L866.5 977 866.5 961 L867.5 963 867.5 978 L868.5 992 868.5 964 L869.5 968 869.5 982 L870.5 982 870.5 963 L871.5 951 871.5 980 L872.5 965 872.5 932 L873.5 965 873.5 977 L874.5 984 874.5 963 L875.5 963 875.5 989 L876.5 1017 876.5 964 L877.5 960 877.5 1017 L878.5 985 878.5 960 L879.5 965 879.5 978 L880.5 989 880.5 965 L881.5 970 881.5 1002 L882.5 995 882.5 970 L883.5 940 883.5 986 L884.5 985 884.5 939 L885.5 966 885.5 977 L886.5 989 886.5 968 L887.5 965 887.5 986 L888.5 987 888.5 961 L889.5 961 889.5 987 L890.5 985 890.5 961 L891.5 967 891.5 978 L892.5 995 892.5 969 L893.5 964 893.5 973 L894.5 987 894.5 970 L895.5 965 895.5 979 L896.5 980 896.5 964 L897.5 969 897.5 988 L898.5 996 898.5 967 L899.5 969 899.5 992 L900.5 986 900.5 963 L901.5 967 901.5 989 L902.5 999 902.5 967 L903.5 967 903.5 1016 L904.5 987 904.5 961 L905.5 945 905.5 968 L906.5 979 906.5 960 L907.5 960 907.5 981 L908.5 987 908.5 966 L909.5 965 909.5 997 L910.5 984 910.5 969 L911.5 970 911.5 989 L912.5 1002 912.5 969 L913.5 964 913.5 994 L914.5 990 914.5 969 L915.5 967 915.5 1006 L916.5 1002 916.5 970 L917.5 971 917.5 995 L918.5 994 918.5 972 L919.5 963 919.5 984 L920.5 980 920.5 964 L921.5 964 921.5 976 L922.5 1006 922.5 967 L923.5 966 923.5 979 L924.5 989 924.5 970 L925.5 968 925.5 989 L926.5 985 926.5 963 L927.5 965 927.5 986 L928.5 986 928.5 968 L929.5 972 929.5 993 L930.5 979 930.5 963 L931.5 965 931.5 980 L932.5 996 932.5 967 L933.5 970 933.5 993 L934.5 1000 934.5 963 L935.5 969 935.5 991 L936.5 998 936.5 971 L937.5 965 937.5 980 L938.5 998 938.5 968 L939.5 966 939.5 1000 L940.5 994 940.5 959 L941.5 960 941.5 992 L942.5 988 942.5 966 L943.5 964 943.5 974 L944.5 983 944.5 965 L945.5 962 945.5 986 L946.5 982 946.5 966 L947.5 968 947.5 988 L948.5 980 948.5 965 L949.5 968 949.5 990 L950.5 989 950.5 968 L951.5 967 951.5 994 L952.5 991 952.5 970 L953.5 965 953.5 993 L954.5 998 954.5 972 L955.5 966 955.5 986 L956.5 997 956.5 967 L957.5 967 957.5 990 L958.5 991 958.5 972 L959.5 964 959.5 992 L960.5 987 960.5 966 L961.5 969 961.5 996 L962.5 995 962.5 962 L963.5 968 963.5 984 L964.5 990 964.5 967 L965.5 971 965.5 998 L966.5 985 966.5 968 L967.5 965 967.5 988 L968.5 987 968.5 969 L969.5 962 969.5 992 L970.5 985 970.5 966 L971.5 966 971.5 990 L972.5 992 972.5 968 L973.5 967 973.5 989 L974.5 996 974.5 965 L975.5 964 975.5 996 L976.5 986 976.5 966 L977.5 971 977.5 990 L978.5 994 978.5 969 L979.5 965 979.5 994 L980.5 1010 980.5 965 L981.5 971 981.5 988 L982.5 994 982.5 964 L983.5 967 983.5 997 L984.5 996 984.5 971 L985.5 966 985.5 999 L986.5 991 986.5 966 L987.5 965 987.5 982 L988.5 990 988.5 969 L989.5 964 989.5 1013 L990.5 1001 990.5 966 L991.5 969 991.5 987 L992.5 991 992.5 966 L993.5 970 993.5 989 L994.5 1001 994.5 970 L995.5 968 995.5 982 L996.5 999 996.5 962 L997.5 965 997.5 999 L998.5 1004 998.5 969 L999.5 965 999.5 983 L1000.5 988 1000.5 968 L1001.5 969 1001.5 1000 L1002.5 993 1002.5 969 L1003.5 971 1003.5 998 L1004.5 988 1004.5 970 L1005.5 969 1005.5 988 L1006.5 994 1006.5 969 L1007.5 964 1007.5 989 L1008.5 1003 1008.5 965 L1009.5 963 1009.5 999 L1010.5 1005 1010.5 971 L1011.5 966 1011.5 988 L1012.5 1003 1012.5 969 L1013.5 970 1013.5 998 L1014.5 990 1014.5 963 L1015.5 968 1015.5 988 L1016.5 997 1016.5 973 L1017.5 970 1017.5 1001 L1018.5 987 1018.5 970 L1019.5 973 1019.5 1001 L1020.5 999 1020.5 967 L1021.5 970 1021.5 998 L1022.5 998 1022.5 968 L1023.5 968 1023.5 993 L1024.5 992 1024.5 968 L1025.5 968 1025.5 1003 L1026.5 999 1026.5 969 L1027.5 968 1027.5 1000 L1028.5 992 1028.5 968 L1029.5 967 1029.5 988 L1030.5 996 1030.5 961 L1031.5 969 1031.5 996 L1032.5 1003 1032.5 972 L1033.5 970 1033.5 995 L1034.5 1017 1034.5 969 L1035.5 969 1035.5 1000 L1036.5 992 1036.5 968 L1037.5 965 1037.5 996 L1038.5 1005 1038.5 970 L1039.5 968 1039.5 1007 L1040.5 1000 1040.5 969 L1041.5 970 1041.5 997 L1042.5 1000 1042.5 968 L1043.5 967 1043.5 997 L1044.5 987 1044.5 969 L1045.5 967 1045.5 1000 L1046.5 1005 1046.5 969 L1047.5 966 1047.5 995 L1048.5 997 1048.5 964 L1049.5 965 1049.5 1007 L1050.5 1004 1050.5 967 L1051.5 970 1051.5 990 L1052.5 999 1052.5 969 L1053.5 968 1053.5 1007 L1054.5 991 1054.5 972 L1055.5 965 1055.5 992 L1056.5 1006 1056.5 969 L1057.5 971 1057.5 1005 L1058.5 989 1058.5 967 L1059.5 966 1059.5 998 L1060.5 990 1060.5 968 L1061.5 966 1061.5 990 L1062.5 1000 1062.5 963 L1063.5 968 1063.5 1002 L1064.5 1003 1064.5 963 L1065.5 964 1065.5 1008 L1066.5 994 1066.5 966 L1067.5 968 1067.5 997 L1068.5 988 1068.5 970 L1069.5 973 1069.5 994 L1070.5 997 1070.5 972 L1071.5 967 1071.5 1008 L1072.5 994 1072.5 967 L1073.5 968 1073.5 1002 L1074.5 997 1074.5 972 L1075.5 971 1075.5 1000 L1076.5 1000 1076.5 968 L1077.5 966 1077.5 1005 L1078.5 1006 1078.5 971 L1079.5 969 1079.5 987 L1080.5 996 1080.5 970 L1081.5 973 1081.5 1005 L1082.5 987 1082.5 971 L1083.5 970 1083.5 1000 L1084.5 1003 1084.5 965 L1085.5 968 1085.5 1003 L1086.5 1003 1086.5 965 L1087.5 967 1087.5 993 L1088.5 993 1088.5 972 L1089.5 963 1089.5 1003 L1090.5 1005 1090.5 963 L1091.5 964 1091.5 1000 L1092.5 993 1092.5 967 L1093.5 968 1093.5 997 L1094.5 996 1094.5 972 L1095.5 970 1095.5 1012 L1096.5 994 1096.5 973 L1097.5 975 1097.5 1003 L1098.5 1001 1098.5 970 L1099.5 972 1099.5 1006 L1100.5 1010 1100.5 968 L1101.5 968 1101.5 1002 L1102.5 1008 1102.5 968 L1103.5 973 1103.5 1010 L1104.5 999 1104.5 970 L1105.5 970 1105.5 1002 L1106.5 1001 1106.5 972 L1107.5 969 1107.5 997 L1108.5 992 1108.5 962 L1109.5 965 1109.5 992 L1110.5 1013 1110.5 969 L1111.5 967 1111.5 1000 L1112.5 997 1112.5 970 L1113.5 968 1113.5 1005 L1114.5 1004 1114.5 970 L1115.5 970 1115.5 1002 L1116.5 1007 1116.5 968 L1117.5 971 1117.5 993 L1118.5 995 1118.5 968 L1119.5 972 1119.5 1004 L1120.5 1007 1120.5 970 L1121.5 976 1121.5 997 L1122.5 999 1122.5 968 L1123.5 964 1123.5 1003 L1124.5 990 1124.5 970 L1125.5 971 1125.5 997 L1126.5 1007 1126.5 969 L1127.5 967 1127.5 1007 L1128.5 990 1128.5 967 L1129.5 974 1129.5 993 L1130.5 1017 1130.5 971 L1131.5 973 1131.5 998 L1132.5 1003 1132.5 973 L1133.5 967 1133.5 995 L1134.5 1001 1134.5 966 L1135.5 967 1135.5 998 L1136.5 1014 1136.5 973 L1137.5 972 1137.5 1001 L1138.5 990 1138.5 974 L1139.5 974 1139.5 999 L1140.5 996 1140.5 968 L1141.5 972 1141.5 997 L1142.5 993 1142.5 970 L1143.5 967 1143.5 1012 L1144.5 997 1144.5 971 L1145.5 972 1145.5 1008 L1146.5 1005 1146.5 970 L1147.5 974 1147.5 1007 L1148.5 998 1148.5 972 L1149.5 974 1149.5 1002 L1150.5 1001 1150.5 967 L1151.5 971 1151.5 1008 L1152.5 1002 1152.5 973 L1153.5 968 1153.5 1002 L1154.5 1006 1154.5 971 L1155.5 974 1155.5 1009 L1156.5 1004 1156.5 973 L1157.5 978 1157.5 1006 L1158.5 1012 1158.5 969 L1159.5 973 1159.5 1003 L1160.5 1000 1160.5 972 L1161.5 968 1161.5 1017 L1162.5 996 1162.5 971 L1163.5 972 1163.5 995 L1164.5 1014 1164.5 975 L1165.5 974 1165.5 1009 L1166.5 994 1166.5 970 L1167.5 976 1167.5 999 L1168.5 996 1168.5 970 L1169.5 970 1169.5 996 L1170.5 1007 1170.5 966 L1171.5 975 1171.5 1011 L1172.5 994 1172.5 975 L1173.5 972 1173.5 1017 L1174.5 1004 1174.5 967 L1175.5 970 1175.5 1003 L1176.5 996 1176.5 969 L1177.5 970 1177.5 1012 L1178.5 998 1178.5 966 L1179.5 977 1179.5 1004 L1180.5 1006 1180.5 968 L1181.5 972 1181.5 1017 L1182.5 1005 1182.5 968 L1183.5 973 1183.5 1017 L1184.5 1004 1184.5 972 L1185.5 974 1185.5 1001 L1186.5 1013 1186.5 972 L1187.5 969 1187.5 999 L1188.5 1007 1188.5 971 L1189.5 971 1189.5 996 L1190.5 997 1190.5 969 L1191.5 976 1191.5 1004 L1192.5 1003 1192.5 972 L1193.5 972 1193.5 998 L1194.5 1001 1194.5 973 L1195.5 976 1195.5 999 L1196.5 1000 1196.5 973 L1197.5 972 1197.5 1000 L1198.5 1001 1198.5 972 L1199.5 970 1199.5 998 L1200.5 1008 1200.5 970 L1201.5 973 1201.5 1001 L1202.5 1006 1202.5 976 L1203.5 975 1203.5 1003 L1204.5 998 1204.5 977 L1205.5 967 1205.5 1012 L1206.5 1001 1206.5 974 L1207.5 971 1207.5 1001 L1208.5 997 1208.5 969 L1209.5 975 1209.5 1000 L1210.5 1007 1210.5 972 L1211.5 973 1211.5 998 L1212.5 1017 1212.5 974 L1213.5 975 1213.5 1009 L1214.5 1008 1214.5 974 L1215.5 972 1215.5 996 L1216.5 1005 1216.5 971 L1217.5 971 1217.5 1000 L1218.5 1016 1218.5 969 L1219.5 970 1219.5 1004 L1220.5 1009 1220.5 973 L1221.5 966 1221.5 1013 L1222.5 995 1222.5 978 L1223.5 976 1223.5 999 L1224.5 1015 1224.5 973 L1225.5 977 1225.5 1017 L1226.5 1014 1226.5 977 L1227.5 973 1227.5 1005 L1228.5 1009 1228.5 971 L1229.5 976 1229.5 1003 L1230.5 1003 1230.5 976 L1231.5 971 1231.5 1010 L1232.5 1005 1232.5 968 L1233.5 977 1233.5 1013 L1234.5 998 1234.5 976 L1235.5 975 1235.5 1008 L1236.5 1014 1236.5 971 L1237.5 975 1237.5 1009 L1238.5 1003 1238.5 971 L1239.5 977 1239.5 1017 L1240.5 1004 1240.5 973 L1241.5 970 1241.5 1002 L1242.5 1007 1242.5 968 L1243.5 970 1243.5 1001 L1244.5 1004 1244.5 978 L1245.5 972 1245.5 1008 L1246.5 1006 1246.5 975 L1247.5 970 1247.5 1016 L1248.5 1007 1248.5 972 L1249.5 975 1249.5 1017 L1250.5 1013 1250.5 974 L1251.5 967 1251.5 1009 L1252.5 1006 1252.5 975 L1253.5 979 1253.5 1010 L1254.5 1006 1254.5 975 L1255.5 971 1255.5 1005 L1256.5 1010 1256.5 971 L1257.5 977 1257.5 1007 L1258.5 1002 1258.5 974 L1259.5 975 1259.5 1013 L1260.5 1013 1260.5 975 L1261.5 974 1261.5 1003 L1262.5 1017 1262.5 977 L1263.5 971 1263.5 1014 L1264.5 1017 1264.5 969 L1265.5 970 1265.5 1003 L1266.5 1001 1266.5 977 L1267.5 977 1267.5 1003 L1268.5 1014 1268.5 975 L1269.5 975 1269.5 1002 L1270.5 1006 1270.5 975 L1271.5 976 1271.5 1005 L1272.5 999 1272.5 972 L1273.5 970 1273.5 1008 L1274.5 1017 1274.5 975 L1275.5 971 1275.5 1008 L1276.5 1010 1276.5 973 L1277.5 971 1277.5 1002 L1278.5 1011 1278.5 970 L1279.5 974 1279.5 1016 L1280.5 1002 1280.5 975 L1281.5 973 1281.5 1003 L1282.5 1002 1282.5 974 L1283.5 976 1283.5 1017 L1284.5 1004 1284.5 971 L1285.5 972 1285.5 1017 L1286.5 1017 1286.5 980 L1287.5 972 1287.5 1016 L1288.5 1004 1288.5 970 L1289.5 970 1289.5 1012 L1290.5 1010 1290.5 975 L1291.5 977 1291.5 1017 L1292.5 1017 1292.5 969 L1293.5 972 1293.5 1002 L1294.5 1004 1294.5 978 L1295.5 973 1295.5 1000 L1296.5 1006 1296.5 974 L1297.5 968 1297.5 1012 L1298.5 1004 1298.5 971 L1299.5 973 1299.5 1003 L1300.5 998 1300.5 974 L1301.5 971 1301.5 1006 L1302.5 1016 1302.5 973 L1303.5 980 1303.5 1008 L1304.5 1017 1304.5 973 L1305.5 977 1305.5 1004 L1306.5 1003 1306.5 975 L1307.5 969 1307.5 1004 L1308.5 1001 1308.5 972 L1309.5 978 1309.5 1002 L1310.5 1004 1310.5 974 L1311.5 976 1311.5 1010 L1312.5 1004 1312.5 976 L1313.5 974 1313.5 1016 L1314.5 1006 1314.5 974 L1315.5 976 1315.5 1004 L1316.5 1002 1316.5 977 L1317.5 979 1317.5 1015 L1318.5 1017 1318.5 977 L1319.5 970 1319.5 1002 L1320.5 1010 1320.5 974 L1321.5 974 1321.5 999 L1322.5 1007 1322.5 974 L1323.5 977 1323.5 1006 L1324.5 1017 1324.5 973 L1325.5 976 1325.5 1009 L1326.5 996 1326.5 977 L1327.5 969 1327.5 1013 L1328.5 1007 1328.5 970 L1329.5 972 1329.5 1017 L1330.5 1012 1330.5 971 L1331.5 973 1331.5 1006 L1332.5 1004 1332.5 975 L1333.5 971 1333.5 1010 L1334.5 999 1334.5 976 L1335.5 975 1335.5 1008 L1336.5 1012 1336.5 977 L1337.5 975 1337.5 1003 L1338.5 1007 1338.5 979 L1339.5 971 1339.5 1017 L1340.5 1002 1340.5 975 L1341.5 977 1341.5 1003 L1342.5 1001 1342.5 973 L1343.5 975 1343.5 1007 L1344.5 1012 1344.5 974 L1345.5 972 1345.5 1004 L1346.5 996 1346.5 978 L1347.5 978 1347.5 1007 L1348.5 1010 1348.5 967 L1349.5 976 1349.5 1005 L1350.5 1005 1350.5 972 L1351.5 976 1351.5 1017 L1352.5 1014 1352.5 973 L1353.5 971 1353.5 1013 L1354.5 1004 1354.5 976 L1355.5 976 1355.5 1008 L1356.5 1017 1356.5 970 L1357.5 978 1357.5 1006 L1358.5 1008 1358.5 971 L1359.5 976 1359.5 1014 L1360.5 1011 1360.5 970 L1361.5 972 1361.5 996 L1362.5 1004 1362.5 978 L1363.5 973 1363.5 1012 L1364.5 1005 1364.5 970 L1365.5 976 1365.5 1011 L1366.5 1009 1366.5 977 L1367.5 977 1367.5 1012 L1368.5 1012 1368.5 968 L1369.5 974 1369.5 1002 L1370.5 1002 1370.5 980 L1371.5 981 1371.5 1003 L1372.5 1015 1372.5 971 L1373.5 974 1373.5 1002 L1374.5 1003 1374.5 972 L1375.5 969 1375.5 1006 L1376.5 1016 1376.5 974 L1377.5 980 1377.5 1006 L1378.5 1016 1378.5 973 L1379.5 976 1379.5 996 L1380.5 1016 1380.5 973 L1381.5 980 1381.5 1005 L1382.5 1017 1382.5 979 L1383.5 975 1383.5 1011 L1384.5 986 1384.5 979" fill="none" stroke="#00ffff" stroke-width="1" shape-rendering="crispEdges"/><path d="M57.9 951.2 L61.3 949.4 L64.7 950.4 L68.0 955.5 L71.2 968.8 L74.4 965.6 L77.6 955.6 L80.7 950.8 L83.7 948.0 L86.7 946.3 L89.6 945.7 L92.5 946.0 L95.4 946.7 L98.2 947.7 L100.9 949.1 L103.7 950.3 L106.4 951.0 L109.0 952.2 L111.6 955.4 L114.2 961.1 L116.7 964.0 L119.2 959.2 L121.7 955.7 L124.2 954.2 L126.6 953.5 L128.9 954.2 L131.3 957.7 L133.6 962.5 L135.9 959.9 L138.2 956.7 L140.4 957.6 L142.6 961.7 L144.8 961.4 L147.0 955.9 L149.1 951.7 L151.2 950.0 L153.3 949.9 L155.3 951.1 L157.4 952.7 L159.4 952.5 L161.4 950.5 L163.4 948.6 L165.3 947.1 L167.3 946.3 L169.2 947.1 L171.1 950.3 L173.0 954.3 L174.8 951.8 L176.7 948.4 L178.5 947.5 L180.3 949.1 L182.1 952.5 L183.8 956.0 L185.6 956.5 L187.3 954.8 L189.1 953.2 L190.8 952.7 L192.5 952.2 L194.1 950.2 L195.8 947.4 L197.4 945.4 L199.1 944.7 L200.7 945.4 L202.3 947.4 L203.9 950.3 L205.4 953.2 L207.0 953.6 L208.6 951.0 L210.1 948.2 L211.6 946.6 L213.1 947.0 L214.6 949.2 L216.1 952.9 L217.6 957.3 L219.1 959.0 L220.5 956.9 L222.0 953.4 L223.4 951.1 L224.8 950.6 L226.2 950.9 L227.6 951.7 L229.0 948.3 L230.4 931.6 L231.8 931.0 L233.1 946.5 L234.5 949.0 L235.8 949.8 L237.1 951.4 L238.4 952.1 L239.8 953.8 L241.1 959.1 L242.3 965.9 L243.6 963.3 L244.9 959.2 L246.2 958.2 L247.4 958.0 L248.7 956.4 L249.9 954.5 L251.2 953.7 L252.4 954.8 L253.6 958.3 L254.8 965.4 L256.0 968.6 L257.2 959.7 L258.4 953.3 L259.6 951.4 L260.7 952.1 L261.9 953.8 L263.1 954.8 L264.2 955.3 L265.3 956.5 L266.5 957.6 L267.6 957.4 L268.7 956.3 L269.8 954.9 L271.0 953.0 L272.1 951.9 L273.1 952.4 L274.2 953.9 L275.3 953.7 L276.4 952.1 L277.5 951.2 L278.5 951.4 L279.6 953.9 L280.6 961.4 L281.7 966.5 L282.7 955.9 L283.8 949.1 L284.8 946.4 L285.8 946.6 L286.8 949.8 L287.8 956.4 L288.9 959.3 L289.9 954.4 L290.8 951.4 L291.8 950.9 L292.8 951.9 L293.8 954.5 L294.8 958.3 L295.8 960.5 L296.7 959.0 L297.7 956.1 L298.6 953.8 L299.6 953.5 L300.5 955.9 L301.5 958.6 L302.4 955.7 L303.3 950.5 L304.3 947.3 L305.2 945.7 L306.1 945.1 L307.0 945.3 L307.9 946.5 L308.8 948.7 L309.7 951.9 L310.6 956.5 L311.5 960.3 L312.4 961.3 L313.3 961.1 L314.2 961.1 L315.0 961.4 L315.9 961.4 L316.8 959.8 L317.6 955.8 L318.5 951.4 L319.4 948.7 L320.2 947.8 L321.1 948.4 L321.9 950.1 L322.7 952.4 L323.6 954.5 L324.4 955.6 L325.2 955.8 L326.1 956.2 L326.9 956.9 L327.7 956.3 L328.5 953.9 L329.3 952.0 L330.1 951.9 L330.9 954.9 L331.7 961.8 L332.5 964.0 L333.3 956.9 L334.1 952.2 L334.9 950.5 L335.7 950.1 L336.5 950.1 L337.2 950.3 L338.0 950.8 L338.8 951.7 L339.5 953.4 L340.3 956.2 L341.1 958.5 L341.8 958.2 L342.6 955.8 L343.3 953.8 L344.1 953.0 L344.8 952.6 L345.6 952.3 L346.3 952.6 L347.0 954.1 L347.8 955.6 L348.5 955.0 L349.2 953.0 L350.0 951.8 L350.7 951.5 L351.4 950.5 L352.1 948.1 L352.8 946.0 L353.5 945.5 L354.3 947.0 L355.0 950.3 L355.7 954.4 L356.4 957.8 L357.1 958.1 L357.8 956.2 L358.4 955.6 L359.1 959.6 L359.8 954.7 L360.5 942.1 L361.2 951.9 L361.9 959.0 L362.6 955.4 L363.2 951.8 L363.9 948.5 L364.6 946.1 L365.2 945.4 L365.9 946.1 L366.6 948.0 L367.2 950.5 L367.9 953.0 L368.5 956.6 L369.2 959.1 L369.9 956.1 L370.5 951.4 L371.1 949.3 L371.8 949.9 L372.4 952.4 L373.1 953.5 L373.7 952.7 L374.4 953.2 L375.0 957.9 L375.6 965.7 L376.2 968.7 L376.9 964.1 L377.5 959.8 L378.1 956.9 L378.7 954.1 L379.4 951.7 L380.0 950.0 L380.6 949.6 L381.2 950.4 L381.8 951.6 L382.4 952.3 L383.0 951.6 L383.6 950.3 L384.2 949.4 L384.8 949.9 L385.4 951.7 L386.0 953.2 L386.6 951.2 L387.2 947.3 L387.8 944.4 L388.4 943.1 L389.0 943.4 L389.6 945.3 L390.2 948.6 L390.8 952.6 L391.3 956.5 L391.9 957.2 L392.5 954.7 L393.1 951.4 L393.6 948.7 L394.2 947.0 L394.5 946 L395.5 947 L396.5 949 L397.5 956 397.5 951 L398.5 959 L399.5 956 L400.5 956 400.5 958 L401.5 959 L402.5 960 402.5 957 L403.5 950 403.5 952 L404.5 951 404.5 950 L405.5 952 L406.5 950 L407.5 951 407.5 952 L408.5 955 L409.5 961 409.5 958 L410.5 962 L411.5 960 L412.5 962 412.5 964 L413.5 963 413.5 958 L414.5 952 414.5 953 L415.5 956 415.5 953 L416.5 960 416.5 962 L417.5 959 417.5 954 L418.5 951 L419.5 952 419.5 954 L420.5 967 420.5 960 L421.5 962 421.5 967 L422.5 960 L423.5 964 423.5 961 L424.5 961 424.5 965 L425.5 955 425.5 951 L426.5 951 426.5 952 L427.5 956 427.5 955 L428.5 954 428.5 955 L429.5 954 L430.5 957 430.5 955 L431.5 961 431.5 964 L432.5 966 L433.5 970 433.5 968 L434.5 973 434.5 975 L435.5 967 435.5 949 L436.5 936 436.5 946 L437.5 969 437.5 960 L438.5 970 438.5 976 L439.5 965 439.5 963 L440.5 955 440.5 962 L441.5 961 441.5 955 L442.5 959 442.5 967 L443.5 957 443.5 954 L444.5 954 444.5 971 L445.5 950 L446.5 954 446.5 952 L447.5 954 L448.5 952 448.5 954 L449.5 958 449.5 953 L450.5 952 450.5 960 L451.5 953 451.5 952 L452.5 954 L453.5 949 453.5 953 L454.5 951 454.5 949 L455.5 952 L456.5 949 456.5 951 L457.5 949 457.5 948 L458.5 949 L459.5 950 459.5 953 L460.5 953 L461.5 953 L462.5 953 462.5 952 L463.5 952 463.5 953 L464.5 954 L465.5 953 465.5 949 L466.5 949 466.5 950 L467.5 953 467.5 952 L468.5 951 468.5 954 L469.5 949 L470.5 954 470.5 950 L471.5 954 L472.5 955 472.5 964 L473.5 958 473.5 950 L474.5 948 L475.5 948 475.5 950 L476.5 951 476.5 949 L477.5 947 L478.5 950 478.5 956 L479.5 978 479.5 967 L480.5 950 480.5 957 L481.5 954 481.5 951 L482.5 954 482.5 956 L483.5 955 L484.5 955 484.5 953 L485.5 951 L486.5 952 486.5 955 L487.5 954 487.5 953 L488.5 956 488.5 957 L489.5 961 489.5 957 L490.5 965 490.5 972 L491.5 967 491.5 954 L492.5 954 492.5 957 L493.5 963 493.5 961 L494.5 955 494.5 961 L495.5 953 495.5 952 L496.5 953 496.5 963 L497.5 962 497.5 949 L498.5 949 498.5 952 L499.5 964 499.5 957 L500.5 946 500.5 953 L501.5 954 501.5 946 L502.5 963 502.5 972 L503.5 969 503.5 955 L504.5 949 504.5 951 L505.5 957 505.5 950 L506.5 961 506.5 965 L507.5 956 507.5 949 L508.5 948 508.5 950 L509.5 957 509.5 954 L510.5 953 510.5 955 L511.5 975 511.5 959 L512.5 970 512.5 984 L513.5 974 513.5 965 L514.5 957 514.5 967 L515.5 955 L516.5 956 516.5 952 L517.5 948 517.5 951 L518.5 952 518.5 949 L519.5 951 L520.5 950 L521.5 950 L522.5 952 522.5 956 L523.5 966 523.5 959 L524.5 970 524.5 975 L525.5 964 525.5 957 L526.5 963 526.5 966 L527.5 963 527.5 958 L528.5 953 528.5 957 L529.5 953 529.5 950 L530.5 953 530.5 956 L531.5 952 L532.5 963 532.5 952 L533.5 952 533.5 967 L534.5 950 534.5 948 L535.5 945 535.5 948 L536.5 954 536.5 945 L537.5 956 537.5 963 L538.5 966 538.5 962 L539.5 960 539.5 963 L540.5 964 540.5 957 L541.5 953 541.5 954 L542.5 954 542.5 950 L543.5 950 543.5 952 L544.5 951 L545.5 960 545.5 951 L546.5 949 546.5 958 L547.5 948 547.5 947 L548.5 948 548.5 964 L549.5 960 549.5 953 L550.5 958 550.5 961 L551.5 955 551.5 953 L552.5 955 552.5 957 L553.5 954 553.5 950 L554.5 952 554.5 953 L555.5 953 555.5 949 L556.5 948 556.5 952 L557.5 960 557.5 957 L558.5 960 558.5 962 L559.5 967 559.5 958 L560.5 963 560.5 966 L561.5 966 561.5 962 L562.5 958 562.5 961 L563.5 961 563.5 957 L564.5 944 564.5 953 L565.5 952 565.5 944 L566.5 957 566.5 965 L567.5 971 567.5 956 L568.5 949 568.5 961 L569.5 958 569.5 950 L570.5 951 570.5 958 L571.5 959 571.5 955 L572.5 955 572.5 960 L573.5 962 573.5 957 L574.5 958 574.5 961 L575.5 973 575.5 960 L576.5 956 576.5 962 L577.5 955 577.5 950 L578.5 950 L579.5 950 579.5 956 L580.5 953 580.5 948 L581.5 946 581.5 948 L582.5 951 582.5 949 L583.5 950 583.5 958 L584.5 952 584.5 946 L585.5 957 585.5 969 L586.5 969 586.5 955 L587.5 955 587.5 958 L588.5 955 588.5 952 L589.5 959 589.5 969 L590.5 964 590.5 950 L591.5 945 591.5 950 L592.5 959 592.5 953 L593.5 957 593.5 964 L594.5 955 594.5 950 L595.5 950 595.5 956 L596.5 964 596.5 951 L597.5 947 597.5 951 L598.5 962 598.5 948 L599.5 949 599.5 953 L600.5 950 600.5 948 L601.5 947 601.5 949 L602.5 962 602.5 950 L603.5 945 603.5 951 L604.5 962 604.5 950 L605.5 955 605.5 961 L606.5 952 606.5 946 L607.5 943 607.5 950 L608.5 963 608.5 955 L609.5 952 609.5 957 L610.5 956 610.5 950 L611.5 954 611.5 957 L612.5 961 612.5 958 L613.5 953 613.5 956 L614.5 958 614.5 947 L615.5 950 615.5 964 L616.5 966 616.5 953 L617.5 953 617.5 956 L618.5 955 618.5 950 L619.5 956 619.5 967 L620.5 964 620.5 947 L621.5 953 621.5 974 L622.5 965 622.5 957 L623.5 953 623.5 960 L624.5 955 624.5 946 L625.5 947 625.5 952 L626.5 953 626.5 946 L627.5 949 627.5 955 L628.5 953 628.5 949 L629.5 946 629.5 957 L630.5 971 630.5 959 L631.5 951 631.5 963 L632.5 958 632.5 948 L633.5 951 633.5 969 L634.5 966 634.5 946 L635.5 946 635.5 950 L636.5 962 636.5 949 L637.5 952 637.5 964 L638.5 953 638.5 947 L639.5 948 639.5 966 L640.5 963 640.5 949 L641.5 946 641.5 955 L642.5 949 642.5 946 L643.5 948 643.5 960 L644.5 971 644.5 949 L645.5 949 645.5 963 L646.5 952 646.5 947 L647.5 944 647.5 950 L648.5 948 648.5 947 L649.5 947 649.5 955 L650.5 950 650.5 943 L651.5 955 651.5 958 L652.5 959 652.5 953 L653.5 953 653.5 966 L654.5 989 654.5 951 L655.5 947 655.5 950 L656.5 955 656.5 947 L657.5 944 657.5 955 L658.5 947 658.5 942 L659.5 944 659.5 953 L660.5 954 660.5 947 L661.5 945 661.5 947 L662.5 963 662.5 948 L663.5 948 663.5 974 L664.5 964 664.5 951 L665.5 944 665.5 958 L666.5 947 666.5 944 L667.5 944 667.5 948 L668.5 956 668.5 945 L669.5 949 669.5 953 L670.5 950 670.5 943 L671.5 952 671.5 955 L672.5 959 672.5 942 L673.5 942 673.5 950 L674.5 946 674.5 942 L675.5 943 675.5 954 L676.5 955 676.5 946 L677.5 946 677.5 955 L678.5 979 678.5 953 L679.5 943 679.5 954 L680.5 946 680.5 943 L681.5 949 681.5 958 L682.5 962 682.5 942 L683.5 946 683.5 955 L684.5 954 684.5 943 L685.5 940 685.5 949 L686.5 952 686.5 950 L687.5 947 687.5 950 L688.5 959 688.5 945 L689.5 951 689.5 954 L690.5 958 690.5 950 L691.5 947 691.5 960 L692.5 947 692.5 943 L693.5 942 693.5 947 L694.5 946 694.5 940 L695.5 946 695.5 958 L696.5 957 696.5 950 L697.5 939 697.5 949 L698.5 963 698.5 945 L699.5 942 699.5 959 L700.5 945 700.5 941 L701.5 938 701.5 945 L702.5 953 702.5 943 L703.5 942 703.5 953 L704.5 960 704.5 940 L705.5 940 705.5 961 L706.5 953 706.5 945 L707.5 940 707.5 956 L708.5 955 708.5 942 L709.5 939 709.5 959 L710.5 957 710.5 938 L711.5 949 711.5 957 L712.5 963 712.5 945 L713.5 944 713.5 974 L714.5 951 714.5 937 L715.5 942 715.5 947 L716.5 951 716.5 945 L717.5 943 717.5 954 L718.5 947 718.5 943 L719.5 938 719.5 953 L720.5 955 720.5 945 L721.5 939 721.5 951 L722.5 947 722.5 941 L723.5 941 723.5 957 L724.5 950 724.5 938 L725.5 934 725.5 951 L726.5 943 726.5 935 L727.5 940 727.5 944 L728.5 945 728.5 938 L729.5 939 729.5 953 L730.5 958 730.5 938 L731.5 936 731.5 952 L732.5 961 732.5 937 L733.5 938 733.5 950 L734.5 950 734.5 938 L735.5 934 735.5 949 L736.5 946 736.5 936 L737.5 938 737.5 942 L738.5 949 738.5 935 L739.5 935 739.5 942 L740.5 945 740.5 935 L741.5 933 741.5 943 L742.5 942 742.5 933 L743.5 935 743.5 956 L744.5 947 744.5 935 L745.5 942 745.5 956 L746.5 946 746.5 933 L747.5 934 747.5 957 L748.5 952 748.5 931 L749.5 929 749.5 949 L750.5 942 750.5 933 L751.5 931 751.5 942 L752.5 960 752.5 928 L753.5 940 753.5 956 L754.5 949 754.5 934 L755.5 933 755.5 948 L756.5 950 756.5 936 L757.5 930 757.5 948 L758.5 949 758.5 928 L759.5 931 759.5 942 L760.5 953 760.5 937 L761.5 929 761.5 942 L762.5 942 762.5 930 L763.5 926 763.5 931 L764.5 935 764.5 925 L765.5 921 765.5 933 L766.5 944 766.5 923 L767.5 924 767.5 933 L768.5 948 768.5 921 L769.5 921 769.5 942 L770.5 930 770.5 923 L771.5 914 771.5 938 L772.5 941 772.5 916 L773.5 912 773.5 932 L774.5 944 774.5 911 L775.5 916 775.5 927 L776.5 924 776.5 913 L777.5 912 777.5 927 L778.5 926 778.5 910 L779.5 901 779.5 910 L780.5 923 780.5 904 L781.5 903 781.5 922 L782.5 913 782.5 900 L783.5 894 783.5 905 L784.5 903 784.5 895 L785.5 893 785.5 904 L786.5 903 786.5 888 L787.5 888 787.5 902 L788.5 888 788.5 882 L789.5 876 789.5 885 L790.5 879 790.5 628 L791.5 879 791.5 892 L792.5 908 792.5 882 L793.5 885 793.5 901 L794.5 897 794.5 886 L795.5 891 795.5 917 L796.5 919 796.5 895 L797.5 899 797.5 910 L798.5 907 798.5 899 L799.5 902 799.5 908 L800.5 920 800.5 903 L801.5 904 801.5 924 L802.5 921 802.5 910 L803.5 909 803.5 921 L804.5 912 804.5 907 L805.5 912 805.5 931 L806.5 930 806.5 919 L807.5 919 807.5 932 L808.5 940 808.5 913 L809.5 918 809.5 936 L810.5 942 810.5 922 L811.5 920 811.5 936 L812.5 927 812.5 920 L813.5 921 813.5 930 L814.5 937 814.5 921 L815.5 924 815.5 940 L816.5 937 816.5 926 L817.5 926 817.5 938 L818.5 935 818.5 926 L819.5 925 819.5 951 L820.5 940 820.5 924 L821.5 924 821.5 937 L822.5 961 822.5 929 L823.5 930 823.5 943 L824.5 943 824.5 929 L825.5 930 825.5 940 L826.5 967 826.5 932 L827.5 934 827.5 946 L828.5 957 828.5 932 L829.5 931 829.5 943 L830.5 957 830.5 933 L831.5 939 831.5 954 L832.5 946 832.5 933 L833.5 934 833.5 946 L834.5 965 834.5 942 L835.5 933 835.5 953 L836.5 958 836.5 937 L837.5 938 837.5 956 L838.5 952 838.5 932 L839.5 935 839.5 949 L840.5 952 840.5 932 L841.5 938 841.5 951 L842.5 963 842.5 939 L843.5 936 843.5 946 L844.5 942 844.5 937 L845.5 936 845.5 963 L846.5 959 846.5 943 L847.5 941 847.5 961 L848.5 948 848.5 939 L849.5 942 849.5 957 L850.5 957 850.5 940 L851.5 940 851.5 951 L852.5 956 852.5 939 L853.5 942 853.5 965 L854.5 948 854.5 936 L855.5 938 855.5 964 L856.5 955 856.5 941 L857.5 940 857.5 957 L858.5 961 858.5 940 L859.5 939 859.5 961 L860.5 962 860.5 942 L861.5 942 861.5 958 L862.5 959 862.5 945 L863.5 942 863.5 948 L864.5 955 864.5 942 L865.5 942 865.5 961 L866.5 968 866.5 942 L867.5 939 867.5 962 L868.5 951 868.5 939 L869.5 943 869.5 973 L870.5 971 870.5 947 L871.5 942 871.5 960 L872.5 949 872.5 941 L873.5 940 873.5 955 L874.5 969 874.5 945 L875.5 944 875.5 988 L876.5 965 876.5 947 L877.5 942 877.5 965 L878.5 956 878.5 944 L879.5 945 879.5 968 L880.5 966 880.5 941 L881.5 943 881.5 964 L882.5 962 882.5 945 L883.5 944 883.5 971 L884.5 963 884.5 945 L885.5 942 885.5 952 L886.5 972 886.5 947 L887.5 943 887.5 960 L888.5 962 888.5 946 L889.5 945 889.5 959 L890.5 966 890.5 945 L891.5 943 891.5 967 L892.5 971 892.5 946 L893.5 944 893.5 959 L894.5 968 894.5 948 L895.5 947 895.5 984 L896.5 983 896.5 948 L897.5 946 897.5 969 L898.5 970 898.5 942 L899.5 946 899.5 957 L900.5 979 900.5 948 L901.5 944 901.5 960 L902.5 974 902.5 943 L903.5 946 903.5 965 L904.5 969 904.5 948 L905.5 944 905.5 959 L906.5 961 906.5 945 L907.5 946 907.5 958 L908.5 963 908.5 946 L909.5 946 909.5 964 L910.5 964 910.5 946 L911.5 948 911.5 961 L912.5 957 912.5 945 L913.5 947 913.5 974 L914.5 976 914.5 947 L915.5 946 915.5 958 L916.5 969 916.5 946 L917.5 945 917.5 970 L918.5 969 918.5 948 L919.5 921 919.5 968 L920.5 971 920.5 921 L921.5 947 921.5 980 L922.5 975 922.5 950 L923.5 946 923.5 978 L924.5 968 924.5 946 L925.5 946 925.5 958 L926.5 969 926.5 950 L927.5 945 927.5 963 L928.5 965 928.5 948 L929.5 950 929.5 981 L930.5 966 930.5 944 L931.5 946 931.5 973 L932.5 965 932.5 946 L933.5 947 933.5 959 L934.5 961 934.5 948 L935.5 947 935.5 971 L936.5 982 936.5 948 L937.5 950 937.5 972 L938.5 986 938.5 953 L939.5 950 939.5 979 L940.5 967 940.5 948 L941.5 950 941.5 969 L942.5 974 942.5 951 L943.5 949 943.5 975 L944.5 970 944.5 948 L945.5 952 945.5 967 L946.5 977 946.5 948 L947.5 951 947.5 965 L948.5 965 948.5 951 L949.5 951 949.5 975 L950.5 982 950.5 947 L951.5 945 951.5 965 L952.5 975 952.5 948 L953.5 948 953.5 976 L954.5 965 954.5 946 L955.5 951 955.5 972 L956.5 965 956.5 949 L957.5 950 957.5 964 L958.5 973 958.5 950 L959.5 949 959.5 963 L960.5 971 960.5 949 L961.5 950 961.5 971 L962.5 985 962.5 954 L963.5 949 963.5 978 L964.5 976 964.5 950 L965.5 948 965.5 962 L966.5 969 966.5 949 L967.5 952 967.5 973 L968.5 981 968.5 953 L969.5 947 969.5 967 L970.5 969 970.5 951 L971.5 949 971.5 967 L972.5 973 972.5 949 L973.5 950 973.5 970 L974.5 975 974.5 953 L975.5 948 975.5 966 L976.5 975 976.5 948 L977.5 952 977.5 990 L978.5 964 978.5 948 L979.5 954 979.5 979 L980.5 969 980.5 950 L981.5 952 981.5 978 L982.5 972 982.5 948 L983.5 950 983.5 970 L984.5 975 984.5 951 L985.5 954 985.5 994 L986.5 969 986.5 952 L987.5 951 987.5 979 L988.5 975 988.5 950 L989.5 952 989.5 974 L990.5 972 990.5 953 L991.5 951 991.5 974 L992.5 970 992.5 951 L993.5 947 993.5 965 L994.5 963 994.5 953 L995.5 929 995.5 973 L996.5 974 996.5 951 L997.5 952 997.5 980 L998.5 963 998.5 949 L999.5 952 999.5 985 L1000.5 986 1000.5 952 L1001.5 953 1001.5 985 L1002.5 977 1002.5 950 L1003.5 949 1003.5 981 L1004.5 970 1004.5 950 L1005.5 951 1005.5 970 L1006.5 979 1006.5 956 L1007.5 955 1007.5 972 L1008.5 967 1008.5 951 L1009.5 952 1009.5 974 L1010.5 976 1010.5 949 L1011.5 949 1011.5 967 L1012.5 975 1012.5 950 L1013.5 952 1013.5 982 L1014.5 965 1014.5 951 L1015.5 955 1015.5 988 L1016.5 987 1016.5 949 L1017.5 949 1017.5 966 L1018.5 967 1018.5 952 L1019.5 952 1019.5 982 L1020.5 982 1020.5 953 L1021.5 949 1021.5 977 L1022.5 973 1022.5 952 L1023.5 950 1023.5 967 L1024.5 965 1024.5 952 L1025.5 953 1025.5 970 L1026.5 979 1026.5 952 L1027.5 956 1027.5 971 L1028.5 978 1028.5 952 L1029.5 955 1029.5 986 L1030.5 987 1030.5 954 L1031.5 952 1031.5 973 L1032.5 974 1032.5 953 L1033.5 950 1033.5 986 L1034.5 979 1034.5 950 L1035.5 953 1035.5 974 L1036.5 977 1036.5 953 L1037.5 953 1037.5 970 L1038.5 973 1038.5 955 L1039.5 951 1039.5 976 L1040.5 977 1040.5 950 L1041.5 951 1041.5 977 L1042.5 973 1042.5 953 L1043.5 951 1043.5 973 L1044.5 972 1044.5 953 L1045.5 953 1045.5 970 L1046.5 982 1046.5 955 L1047.5 952 1047.5 968 L1048.5 971 1048.5 953 L1049.5 952 1049.5 976 L1050.5 979 1050.5 951 L1051.5 953 1051.5 970 L1052.5 974 1052.5 951 L1053.5 952 1053.5 979 L1054.5 975 1054.5 951 L1055.5 954 1055.5 985 L1056.5 980 1056.5 954 L1057.5 953 1057.5 974 L1058.5 987 1058.5 951 L1059.5 953 1059.5 966 L1060.5 976 1060.5 955 L1061.5 953 1061.5 969 L1062.5 973 1062.5 951 L1063.5 950 1063.5 965 L1064.5 970 1064.5 952 L1065.5 953 1065.5 983 L1066.5 978 1066.5 954 L1067.5 949 1067.5 992 L1068.5 978 1068.5 954 L1069.5 951 1069.5 966 L1070.5 979 1070.5 948 L1071.5 953 1071.5 984 L1072.5 979 1072.5 953 L1073.5 954 1073.5 979 L1074.5 989 1074.5 953 L1075.5 953 1075.5 977 L1076.5 973 1076.5 952 L1077.5 953 1077.5 981 L1078.5 975 1078.5 952 L1079.5 951 1079.5 972 L1080.5 974 1080.5 953 L1081.5 952 1081.5 976 L1082.5 997 1082.5 954 L1083.5 954 1083.5 971 L1084.5 974 1084.5 954 L1085.5 949 1085.5 974 L1086.5 995 1086.5 952 L1087.5 951 1087.5 975 L1088.5 968 1088.5 954 L1089.5 954 1089.5 972 L1090.5 971 1090.5 952 L1091.5 951 1091.5 976 L1092.5 972 1092.5 951 L1093.5 957 1093.5 984 L1094.5 993 1094.5 951 L1095.5 952 1095.5 974 L1096.5 977 1096.5 951 L1097.5 953 1097.5 972 L1098.5 969 1098.5 953 L1099.5 951 1099.5 975 L1100.5 977 1100.5 953 L1101.5 952 1101.5 970 L1102.5 981 1102.5 954 L1103.5 949 1103.5 974 L1104.5 978 1104.5 949 L1105.5 951 1105.5 968 L1106.5 979 1106.5 953 L1107.5 948 1107.5 973 L1108.5 977 1108.5 950 L1109.5 951 1109.5 974 L1110.5 973 1110.5 951 L1111.5 950 1111.5 969 L1112.5 975 1112.5 953 L1113.5 951 1113.5 981 L1114.5 981 1114.5 952 L1115.5 955 1115.5 985 L1116.5 986 1116.5 951 L1117.5 950 1117.5 973 L1118.5 984 1118.5 955 L1119.5 953 1119.5 981 L1120.5 974 1120.5 954 L1121.5 952 1121.5 969 L1122.5 970 1122.5 952 L1123.5 955 1123.5 974 L1124.5 984 1124.5 952 L1125.5 954 1125.5 969 L1126.5 984 1126.5 955 L1127.5 952 1127.5 973 L1128.5 980 1128.5 952 L1129.5 948 1129.5 973 L1130.5 986 1130.5 951 L1131.5 953 1131.5 971 L1132.5 972 1132.5 954 L1133.5 952 1133.5 978 L1134.5 977 1134.5 951 L1135.5 953 1135.5 980 L1136.5 976 1136.5 953 L1137.5 954 1137.5 979 L1138.5 984 1138.5 954 L1139.5 953 1139.5 978 L1140.5 971 1140.5 951 L1141.5 951 1141.5 982 L1142.5 986 1142.5 954 L1143.5 954 1143.5 978 L1144.5 974 1144.5 952 L1145.5 952 1145.5 994 L1146.5 977 1146.5 957 L1147.5 954 1147.5 972 L1148.5 993 1148.5 954 L1149.5 955 1149.5 976 L1150.5 984 1150.5 953 L1151.5 954 1151.5 981 L1152.5 985 1152.5 954 L1153.5 953 1153.5 987 L1154.5 978 1154.5 957 L1155.5 950 1155.5 984 L1156.5 978 1156.5 952 L1157.5 953 1157.5 971 L1158.5 990 1158.5 955 L1159.5 950 1159.5 979 L1160.5 989 1160.5 952 L1161.5 957 1161.5 979 L1162.5 974 1162.5 952 L1163.5 953 1163.5 980 L1164.5 974 1164.5 955 L1165.5 954 1165.5 980 L1166.5 974 1166.5 953 L1167.5 954 1167.5 974 L1168.5 973 1168.5 951 L1169.5 953 1169.5 984 L1170.5 990 1170.5 951 L1171.5 953 1171.5 1000 L1172.5 978 1172.5 953 L1173.5 953 1173.5 988 L1174.5 983 1174.5 952 L1175.5 955 1175.5 978 L1176.5 981 1176.5 953 L1177.5 953 1177.5 976 L1178.5 978 1178.5 953 L1179.5 956 1179.5 975 L1180.5 981 1180.5 954 L1181.5 953 1181.5 971 L1182.5 983 1182.5 952 L1183.5 951 1183.5 982 L1184.5 983 1184.5 951 L1185.5 950 1185.5 985 L1186.5 1000 1186.5 953 L1187.5 952 1187.5 973 L1188.5 977 1188.5 950 L1189.5 954 1189.5 981 L1190.5 980 1190.5 954 L1191.5 954 1191.5 980 L1192.5 975 1192.5 955 L1193.5 953 1193.5 987 L1194.5 992 1194.5 950 L1195.5 953 1195.5 979 L1196.5 986 1196.5 954 L1197.5 955 1197.5 977 L1198.5 981 1198.5 955 L1199.5 953 1199.5 978 L1200.5 985 1200.5 954 L1201.5 953 1201.5 975 L1202.5 983 1202.5 955 L1203.5 951 1203.5 980 L1204.5 973 1204.5 952 L1205.5 954 1205.5 978 L1206.5 985 1206.5 955 L1207.5 953 1207.5 972 L1208.5 978 1208.5 954 L1209.5 953 1209.5 976 L1210.5 979 1210.5 953 L1211.5 951 1211.5 985 L1212.5 969 1212.5 954 L1213.5 954 1213.5 992 L1214.5 980 1214.5 951 L1215.5 955 1215.5 986 L1216.5 980 1216.5 955 L1217.5 956 1217.5 971 L1218.5 992 1218.5 951 L1219.5 954 1219.5 978 L1220.5 975 1220.5 951 L1221.5 953 1221.5 987 L1222.5 973 1222.5 952 L1223.5 954 1223.5 971 L1224.5 981 1224.5 954 L1225.5 953 1225.5 981 L1226.5 985 1226.5 952 L1227.5 954 1227.5 984 L1228.5 972 1228.5 953 L1229.5 954 1229.5 972 L1230.5 990 1230.5 953 L1231.5 951 1231.5 989 L1232.5 977 1232.5 954 L1233.5 951 1233.5 981 L1234.5 990 1234.5 951 L1235.5 949 1235.5 992 L1236.5 977 1236.5 954 L1237.5 954 1237.5 981 L1238.5 974 1238.5 954 L1239.5 951 1239.5 987 L1240.5 981 1240.5 951 L1241.5 953 1241.5 978 L1242.5 977 1242.5 954 L1243.5 958 1243.5 983 L1244.5 974 1244.5 955 L1245.5 953 1245.5 979 L1246.5 981 1246.5 954 L1247.5 952 1247.5 968 L1248.5 979 1248.5 955 L1249.5 953 1249.5 982 L1250.5 977 1250.5 952 L1251.5 952 1251.5 977 L1252.5 982 1252.5 954 L1253.5 953 1253.5 973 L1254.5 974 1254.5 951 L1255.5 955 1255.5 993 L1256.5 994 1256.5 953 L1257.5 952 1257.5 981 L1258.5 990 1258.5 954 L1259.5 952 1259.5 986 L1260.5 975 1260.5 954 L1261.5 951 1261.5 986 L1262.5 971 1262.5 954 L1263.5 956 1263.5 977 L1264.5 988 1264.5 954 L1265.5 954 1265.5 974 L1266.5 977 1266.5 952 L1267.5 951 1267.5 975 L1268.5 978 1268.5 953 L1269.5 953 1269.5 982 L1270.5 979 1270.5 954 L1271.5 954 1271.5 973 L1272.5 969 1272.5 950 L1273.5 956 1273.5 984 L1274.5 982 1274.5 955 L1275.5 951 1275.5 977 L1276.5 983 1276.5 956 L1277.5 952 1277.5 980 L1278.5 974 1278.5 953 L1279.5 952 1279.5 983 L1280.5 979 1280.5 954 L1281.5 954 1281.5 990 L1282.5 980 1282.5 951 L1283.5 953 1283.5 984 L1284.5 996 1284.5 951 L1285.5 955 1285.5 983 L1286.5 987 1286.5 949 L1287.5 951 1287.5 977 L1288.5 981 1288.5 952 L1289.5 949 1289.5 984 L1290.5 987 1290.5 954 L1291.5 955 1291.5 987 L1292.5 977 1292.5 952 L1293.5 953 1293.5 984 L1294.5 976 1294.5 951 L1295.5 950 1295.5 977 L1296.5 973 1296.5 953 L1297.5 956 1297.5 975 L1298.5 982 1298.5 953 L1299.5 953 1299.5 975 L1300.5 983 1300.5 954 L1301.5 953 1301.5 981 L1302.5 990 1302.5 953 L1303.5 955 1303.5 979 L1304.5 975 1304.5 951 L1305.5 952 1305.5 977 L1306.5 1001 1306.5 955 L1307.5 954 1307.5 980 L1308.5 979 1308.5 955 L1309.5 955 1309.5 985 L1310.5 979 1310.5 952 L1311.5 954 1311.5 984 L1312.5 990 1312.5 955 L1313.5 950 1313.5 985 L1314.5 975 1314.5 953 L1315.5 955 1315.5 986 L1316.5 986 1316.5 955 L1317.5 953 1317.5 977 L1318.5 978 1318.5 954 L1319.5 949 1319.5 995 L1320.5 996 1320.5 952 L1321.5 949 1321.5 976 L1322.5 985 1322.5 954 L1323.5 954 1323.5 977 L1324.5 976 1324.5 955 L1325.5 954 1325.5 985 L1326.5 982 1326.5 954 L1327.5 954 1327.5 981 L1328.5 984 1328.5 953 L1329.5 956 1329.5 980 L1330.5 981 1330.5 952 L1331.5 952 1331.5 987 L1332.5 989 1332.5 949 L1333.5 955 1333.5 978 L1334.5 981 1334.5 954 L1335.5 953 1335.5 985 L1336.5 979 1336.5 953 L1337.5 953 1337.5 971 L1338.5 969 1338.5 954 L1339.5 954 1339.5 990 L1340.5 984 1340.5 955 L1341.5 951 1341.5 981 L1342.5 987 1342.5 954 L1343.5 956 1343.5 993 L1344.5 978 1344.5 950 L1345.5 954 1345.5 987 L1346.5 971 1346.5 954 L1347.5 952 1347.5 991 L1348.5 976 1348.5 952 L1349.5 956 1349.5 980 L1350.5 981 1350.5 951 L1351.5 954 1351.5 991 L1352.5 983 1352.5 951 L1353.5 954 1353.5 978 L1354.5 974 1354.5 953 L1355.5 955 1355.5 980 L1356.5 987 1356.5 956 L1357.5 957 1357.5 986 L1358.5 980 1358.5 954 L1359.5 951 1359.5 980 L1360.5 974 1360.5 952 L1361.5 953 1361.5 979 L1362.5 990 1362.5 954 L1363.5 951 1363.5 999 L1364.5 992 1364.5 953 L1365.5 951 1365.5 976 L1366.5 982 1366.5 953 L1367.5 953 1367.5 985 L1368.5 986 1368.5 953 L1369.5 956 1369.5 979 L1370.5 981 1370.5 954 L1371.5 953 1371.5 983 L1372.5 982 1372.5 954 L1373.5 954 1373.5 976 L1374.5 974 1374.5 955 L1375.5 954 1375.5 981 L1376.5 986 1376.5 952 L1377.5 953 1377.5 986 L1378.5 987 1378.5 953 L1379.5 954 1379.5 979 L1380.5 978 1380.5 953 L1381.5 955 1381.5 993 L1382.5 998 1382.5 957 L1383.5 950 1383.5 990 L1384.5 971 1384.5 959" fill="none" stroke="#ffff00" stroke-width="1" shape-rendering="crispEdges"/><path d="M789.5 852 V905" fill="none" stroke="#00ffff" stroke-width="1" shape-rendering="crispEdges"/></svg><div class="a" style="left:1004px;top:123px;width:900px;height:231px;background:#fff;box-shadow:0 0 0 1px #8c8c8c, 2px 4px 10px rgba(0,0,0,0.45)"></div><svg class="a" style="left:0;top:0" width="1920" height="1079"><path d="M1014.5 132.5 h2.5 l1 1 v4 l-1 1 h-2.5 z" fill="none" stroke="#0000ff" stroke-width="1.1"/><path d="M1019.5 132.5 h2.5 l1 1 v4 l-1 1 h-2.5 z" fill="none" stroke="#ff0000" stroke-width="1.1"/><path d="M1024.5 138.5 v-6 h2.5 l1 1 v1.5 l-1 1 h-2.5" fill="none" stroke="#00ee00" stroke-width="1.1"/><path d="M1013.5 139.5 H1028.5 V146.5 H1013.5 Z M1013.5 143 H1028.5 M1018.5 139.5 V146.5 M1023.5 139.5 V146.5" fill="none" stroke="#6a6a6a" stroke-width="1" shape-rendering="crispEdges"/></svg><div class="t" style="left:1034px;top:135px;font-size:12.6px;color:#9ba0ab">A&amp;B-Harmonic Frequencies, RMS, Phases</div><svg class="a" style="left:0;top:0" width="1920" height="1079"><path d="M1774 139.5 H1784" stroke="#8c8c8c" stroke-width="1" shape-rendering="crispEdges"/><rect x="1823.5" y="134.5" width="9" height="9" fill="none" stroke="#8c8c8c" stroke-width="1" shape-rendering="crispEdges"/><path d="M1873 134 L1883 144 M1883 134 L1873 144" stroke="#8c8c8c" stroke-width="1"/></svg><div class="a" style="left:1006px;top:158px;width:894px;height:193px;background:#000;border-top:2px solid #808080;border-left:1px solid #808080;border-right:1px solid #e0e0e0;border-bottom:1px solid #fff"></div><div class="a" style="left:1007px;top:160px;width:51px;height:15px;background:#f0f0f0;border-right:1px solid #a0a0a0;border-bottom:1px solid #a0a0a0;box-shadow:inset 1px 1px 0 #fff"></div><div class="t" style="left:1014px;top:162px;font-size:11px;color:#000;letter-spacing:-0.1px">A-Order</div><div class="a" style="left:1058px;top:160px;width:98px;height:15px;background:#f0f0f0;border-right:1px solid #a0a0a0;border-bottom:1px solid #a0a0a0;box-shadow:inset 1px 1px 0 #fff"></div><div class="t" style="left:1063px;top:162px;font-size:11px;color:#000;letter-spacing:-0.1px">A-Freq. (Hz)</div><div class="a" style="left:1156px;top:160px;width:99px;height:15px;background:#f0f0f0;border-right:1px solid #a0a0a0;border-bottom:1px solid #a0a0a0;box-shadow:inset 1px 1px 0 #fff"></div><div class="t" style="left:1161px;top:162px;font-size:11px;color:#000;letter-spacing:-0.1px">A-RMS (dBV)</div><div class="a" style="left:1255px;top:160px;width:99px;height:15px;background:#f0f0f0;border-right:1px solid #a0a0a0;border-bottom:1px solid #a0a0a0;box-shadow:inset 1px 1px 0 #fff"></div><div class="t" style="left:1260px;top:162px;font-size:11px;color:#000;letter-spacing:-0.1px">A-%</div><div class="a" style="left:1354px;top:160px;width:100px;height:15px;background:#f0f0f0;border-right:1px solid #a0a0a0;border-bottom:1px solid #a0a0a0;box-shadow:inset 1px 1px 0 #fff"></div><div class="t" style="left:1359px;top:162px;font-size:11px;color:#000;letter-spacing:-0.1px">A-Phase (D)</div><div class="a" style="left:1454px;top:160px;width:49px;height:15px;background:#f0f0f0;border-right:1px solid #a0a0a0;border-bottom:1px solid #a0a0a0;box-shadow:inset 1px 1px 0 #fff"></div><div class="t" style="left:1461px;top:162px;font-size:11px;color:#000;letter-spacing:-0.1px">B-Order</div><div class="a" style="left:1503px;top:160px;width:99px;height:15px;background:#f0f0f0;border-right:1px solid #a0a0a0;border-bottom:1px solid #a0a0a0;box-shadow:inset 1px 1px 0 #fff"></div><div class="t" style="left:1508px;top:162px;font-size:11px;color:#000;letter-spacing:-0.1px">B-Freq. (Hz)</div><div class="a" style="left:1602px;top:160px;width:99px;height:15px;background:#f0f0f0;border-right:1px solid #a0a0a0;border-bottom:1px solid #a0a0a0;box-shadow:inset 1px 1px 0 #fff"></div><div class="t" style="left:1607px;top:162px;font-size:11px;color:#000;letter-spacing:-0.1px">B-RMS (dBV)</div><div class="a" style="left:1701px;top:160px;width:99px;height:15px;background:#f0f0f0;border-right:1px solid #a0a0a0;border-bottom:1px solid #a0a0a0;box-shadow:inset 1px 1px 0 #fff"></div><div class="t" style="left:1706px;top:162px;font-size:11px;color:#000;letter-spacing:-0.1px">B-%</div><div class="a" style="left:1800px;top:160px;width:98px;height:15px;background:#f0f0f0;border-right:1px solid #a0a0a0;border-bottom:1px solid #a0a0a0;box-shadow:inset 1px 1px 0 #fff"></div><div class="t" style="left:1805px;top:162px;font-size:11px;color:#000;letter-spacing:-0.1px">B-Phase (D)</div><svg class="a" style="left:0;top:0" width="1920" height="1079"><path d="M1007 192.5 H1898 M1007 209.5 H1898 M1007 226.5 H1898 M1007 243.5 H1898 M1007 260.5 H1898 M1007 277.5 H1898 M1007 294.5 H1898 M1007 311.5 H1898 M1007 328.5 H1898 M1007 345.5 H1898 M1057.5 175 V350 M1155.5 175 V350 M1254.5 175 V350 M1353.5 175 V350 M1453.5 175 V350 M1502.5 175 V350 M1601.5 175 V350 M1700.5 175 V350 M1799.5 175 V350 M1897.5 175 V350" stroke="#e8e8e8" stroke-width="1" shape-rendering="crispEdges"/></svg><div class="t" style="left:1014px;top:179px;font-size:11.5px;color:#fff;letter-spacing:-0.1px">1</div><div class="t" style="left:1064px;top:179px;font-size:11.5px;color:#fff;letter-spacing:-0.1px">1.001690 kHz</div><div class="t" style="left:1162px;top:179px;font-size:11.5px;color:#fff;letter-spacing:-0.1px">-62.91 dBV</div><div class="t" style="left:1261px;top:179px;font-size:11.5px;color:#fff;letter-spacing:-0.1px">100.0000000</div><div class="t" style="left:1330px;top:179px;font-size:11.5px;color:#fff">%</div><div class="t" style="left:1360px;top:179px;font-size:11.5px;color:#fff;letter-spacing:-0.1px">5.80&nbsp; D</div><div class="t" style="left:1461px;top:179px;font-size:11.5px;color:#fff;letter-spacing:-0.1px">1</div><div class="t" style="left:1509px;top:179px;font-size:11.5px;color:#fff;letter-spacing:-0.1px">1.001690 kHz</div><div class="t" style="left:1608px;top:179px;font-size:11.5px;color:#fff;letter-spacing:-0.1px">0.73 dBV</div><div class="t" style="left:1707px;top:179px;font-size:11.5px;color:#fff;letter-spacing:-0.1px">100.0000000</div><div class="t" style="left:1776px;top:179px;font-size:11.5px;color:#fff">%</div><div class="t" style="left:1806px;top:179px;font-size:11.5px;color:#fff;letter-spacing:-0.1px">-116.71&nbsp; D</div><div class="t" style="left:1014px;top:196px;font-size:11.5px;color:#fff;letter-spacing:-0.1px">2</div><div class="t" style="left:1064px;top:196px;font-size:11.5px;color:#fff;letter-spacing:-0.1px">2.003380 kHz</div><div class="t" style="left:1162px;top:196px;font-size:11.5px;color:#fff;letter-spacing:-0.1px">-147.04 dBV</div><div class="t" style="left:1261px;top:196px;font-size:11.5px;color:#fff;letter-spacing:-0.1px">0.0062160</div><div class="t" style="left:1318px;top:196px;font-size:11.5px;color:#fff">%</div><div class="t" style="left:1360px;top:196px;font-size:11.5px;color:#fff;letter-spacing:-0.1px">-81.43&nbsp; D</div><div class="t" style="left:1461px;top:196px;font-size:11.5px;color:#fff;letter-spacing:-0.1px">2</div><div class="t" style="left:1509px;top:196px;font-size:11.5px;color:#fff;letter-spacing:-0.1px">2.003380 kHz</div><div class="t" style="left:1608px;top:196px;font-size:11.5px;color:#fff;letter-spacing:-0.1px">-130.50 dBV</div><div class="t" style="left:1707px;top:196px;font-size:11.5px;color:#fff;letter-spacing:-0.1px">0.0000275</div><div class="t" style="left:1764px;top:196px;font-size:11.5px;color:#fff">%</div><div class="t" style="left:1806px;top:196px;font-size:11.5px;color:#fff;letter-spacing:-0.1px">-104.39&nbsp; D</div><div class="t" style="left:1014px;top:213px;font-size:11.5px;color:#fff;letter-spacing:-0.1px">3</div><div class="t" style="left:1064px;top:213px;font-size:11.5px;color:#fff;letter-spacing:-0.1px">3.005070 kHz</div><div class="t" style="left:1162px;top:213px;font-size:11.5px;color:#fff;letter-spacing:-0.1px">-148.39 dBV</div><div class="t" style="left:1261px;top:213px;font-size:11.5px;color:#fff;letter-spacing:-0.1px">0.0053225</div><div class="t" style="left:1318px;top:213px;font-size:11.5px;color:#fff">%</div><div class="t" style="left:1360px;top:213px;font-size:11.5px;color:#fff;letter-spacing:-0.1px">-152.63&nbsp; D</div><div class="t" style="left:1461px;top:213px;font-size:11.5px;color:#fff;letter-spacing:-0.1px">3</div><div class="t" style="left:1509px;top:213px;font-size:11.5px;color:#fff;letter-spacing:-0.1px">3.005070 kHz</div><div class="t" style="left:1608px;top:213px;font-size:11.5px;color:#fff;letter-spacing:-0.1px">-133.98 dBV</div><div class="t" style="left:1707px;top:213px;font-size:11.5px;color:#fff;letter-spacing:-0.1px">0.0000184</div><div class="t" style="left:1764px;top:213px;font-size:11.5px;color:#fff">%</div><div class="t" style="left:1806px;top:213px;font-size:11.5px;color:#fff;letter-spacing:-0.1px">-132.97&nbsp; D</div><div class="t" style="left:1014px;top:230px;font-size:11.5px;color:#fff;letter-spacing:-0.1px">4</div><div class="t" style="left:1064px;top:230px;font-size:11.5px;color:#fff;letter-spacing:-0.1px">4.006760 kHz</div><div class="t" style="left:1162px;top:230px;font-size:11.5px;color:#fff;letter-spacing:-0.1px">-150.68 dBV</div><div class="t" style="left:1261px;top:230px;font-size:11.5px;color:#fff;letter-spacing:-0.1px">0.0040870</div><div class="t" style="left:1318px;top:230px;font-size:11.5px;color:#fff">%</div><div class="t" style="left:1360px;top:230px;font-size:11.5px;color:#fff;letter-spacing:-0.1px">42.25&nbsp; D</div><div class="t" style="left:1461px;top:230px;font-size:11.5px;color:#fff;letter-spacing:-0.1px">4</div><div class="t" style="left:1509px;top:230px;font-size:11.5px;color:#fff;letter-spacing:-0.1px">4.006760 kHz</div><div class="t" style="left:1608px;top:230px;font-size:11.5px;color:#fff;letter-spacing:-0.1px">-140.15 dBV</div><div class="t" style="left:1707px;top:230px;font-size:11.5px;color:#fff;letter-spacing:-0.1px">0.0000090</div><div class="t" style="left:1764px;top:230px;font-size:11.5px;color:#fff">%</div><div class="t" style="left:1806px;top:230px;font-size:11.5px;color:#fff;letter-spacing:-0.1px">-84.14&nbsp; D</div><div class="t" style="left:1014px;top:247px;font-size:11.5px;color:#fff;letter-spacing:-0.1px">5</div><div class="t" style="left:1064px;top:247px;font-size:11.5px;color:#fff;letter-spacing:-0.1px">5.008450 kHz</div><div class="t" style="left:1162px;top:247px;font-size:11.5px;color:#fff;letter-spacing:-0.1px">-149.99 dBV</div><div class="t" style="left:1261px;top:247px;font-size:11.5px;color:#fff;letter-spacing:-0.1px">0.0044244</div><div class="t" style="left:1318px;top:247px;font-size:11.5px;color:#fff">%</div><div class="t" style="left:1360px;top:247px;font-size:11.5px;color:#fff;letter-spacing:-0.1px">176.25&nbsp; D</div><div class="t" style="left:1461px;top:247px;font-size:11.5px;color:#fff;letter-spacing:-0.1px">5</div><div class="t" style="left:1509px;top:247px;font-size:11.5px;color:#fff;letter-spacing:-0.1px">5.008450 kHz</div><div class="t" style="left:1608px;top:247px;font-size:11.5px;color:#fff;letter-spacing:-0.1px">-139.03 dBV</div><div class="t" style="left:1707px;top:247px;font-size:11.5px;color:#fff;letter-spacing:-0.1px">0.0000103</div><div class="t" style="left:1764px;top:247px;font-size:11.5px;color:#fff">%</div><div class="t" style="left:1806px;top:247px;font-size:11.5px;color:#fff;letter-spacing:-0.1px">55.78&nbsp; D</div><div class="t" style="left:1014px;top:264px;font-size:11.5px;color:#fff;letter-spacing:-0.1px">6</div><div class="t" style="left:1064px;top:264px;font-size:11.5px;color:#fff;letter-spacing:-0.1px">6.010140 kHz</div><div class="t" style="left:1162px;top:264px;font-size:11.5px;color:#fff;letter-spacing:-0.1px">-152.83 dBV</div><div class="t" style="left:1261px;top:264px;font-size:11.5px;color:#fff;letter-spacing:-0.1px">0.0031915</div><div class="t" style="left:1318px;top:264px;font-size:11.5px;color:#fff">%</div><div class="t" style="left:1360px;top:264px;font-size:11.5px;color:#fff;letter-spacing:-0.1px">162.83&nbsp; D</div><div class="t" style="left:1461px;top:264px;font-size:11.5px;color:#fff;letter-spacing:-0.1px">6</div><div class="t" style="left:1509px;top:264px;font-size:11.5px;color:#fff;letter-spacing:-0.1px">6.010140 kHz</div><div class="t" style="left:1608px;top:264px;font-size:11.5px;color:#fff;letter-spacing:-0.1px">-144.02 dBV</div><div class="t" style="left:1707px;top:264px;font-size:11.5px;color:#fff;letter-spacing:-0.1px">0.0000058</div><div class="t" style="left:1764px;top:264px;font-size:11.5px;color:#fff">%</div><div class="t" style="left:1806px;top:264px;font-size:11.5px;color:#fff;letter-spacing:-0.1px">-96.07&nbsp; D</div><div class="t" style="left:1014px;top:281px;font-size:11.5px;color:#fff;letter-spacing:-0.1px">7</div><div class="t" style="left:1064px;top:281px;font-size:11.5px;color:#fff;letter-spacing:-0.1px">7.011830 kHz</div><div class="t" style="left:1162px;top:281px;font-size:11.5px;color:#fff;letter-spacing:-0.1px">-151.51 dBV</div><div class="t" style="left:1261px;top:281px;font-size:11.5px;color:#fff;letter-spacing:-0.1px">0.0037156</div><div class="t" style="left:1318px;top:281px;font-size:11.5px;color:#fff">%</div><div class="t" style="left:1360px;top:281px;font-size:11.5px;color:#fff;letter-spacing:-0.1px">82.58&nbsp; D</div><div class="t" style="left:1461px;top:281px;font-size:11.5px;color:#fff;letter-spacing:-0.1px">7</div><div class="t" style="left:1509px;top:281px;font-size:11.5px;color:#fff;letter-spacing:-0.1px">7.011830 kHz</div><div class="t" style="left:1608px;top:281px;font-size:11.5px;color:#fff;letter-spacing:-0.1px">-142.97 dBV</div><div class="t" style="left:1707px;top:281px;font-size:11.5px;color:#fff;letter-spacing:-0.1px">0.0000065</div><div class="t" style="left:1764px;top:281px;font-size:11.5px;color:#fff">%</div><div class="t" style="left:1806px;top:281px;font-size:11.5px;color:#fff;letter-spacing:-0.1px">-78.00&nbsp; D</div><div class="t" style="left:1014px;top:298px;font-size:11.5px;color:#fff;letter-spacing:-0.1px">8</div><div class="t" style="left:1064px;top:298px;font-size:11.5px;color:#fff;letter-spacing:-0.1px">8.013520 kHz</div><div class="t" style="left:1162px;top:298px;font-size:11.5px;color:#fff;letter-spacing:-0.1px">-150.78 dBV</div><div class="t" style="left:1261px;top:298px;font-size:11.5px;color:#fff;letter-spacing:-0.1px">0.0040391</div><div class="t" style="left:1318px;top:298px;font-size:11.5px;color:#fff">%</div><div class="t" style="left:1360px;top:298px;font-size:11.5px;color:#fff;letter-spacing:-0.1px">0.00&nbsp; D</div><div class="t" style="left:1461px;top:298px;font-size:11.5px;color:#fff;letter-spacing:-0.1px">8</div><div class="t" style="left:1509px;top:298px;font-size:11.5px;color:#fff;letter-spacing:-0.1px">8.013520 kHz</div><div class="t" style="left:1608px;top:298px;font-size:11.5px;color:#fff;letter-spacing:-0.1px">-144.41 dBV</div><div class="t" style="left:1707px;top:298px;font-size:11.5px;color:#fff;letter-spacing:-0.1px">0.0000055</div><div class="t" style="left:1764px;top:298px;font-size:11.5px;color:#fff">%</div><div class="t" style="left:1806px;top:298px;font-size:11.5px;color:#fff;letter-spacing:-0.1px">0.00&nbsp; D</div><div class="a" style="left:1443px;top:562px;width:232px;height:78px;background:#fff;box-shadow:0 0 0 1px #9a9a9a, 1px 3px 8px rgba(0,0,0,0.45)"></div><div class="a" style="left:1443px;top:594px;width:232px;height:46px;background:#000"></div><svg class="a" style="left:0;top:0" width="1920" height="1079"><path d="M1452.5 570.5 h2.5 l1 1 v4 l-1 1 h-2.5 z" fill="none" stroke="#0000ff" stroke-width="1.1"/><path d="M1457.5 570.5 h2.5 l1 1 v4 l-1 1 h-2.5 z" fill="none" stroke="#ff0000" stroke-width="1.1"/><path d="M1462.5 576.5 v-6 h2.5 l1 1 v1.5 l-1 1 h-2.5" fill="none" stroke="#00ee00" stroke-width="1.1"/><circle cx="1458.5" cy="580.5" r="3" fill="none" stroke="#000" stroke-width="1.2"/><path d="M1457 580.5 H1460 M1458.5 579 V582" stroke="#000" stroke-width="1"/><path d="M1460.8 582.8 L1463 585" stroke="#000" stroke-width="1.3"/></svg><div class="t" style="left:1472px;top:572px;font-size:12.5px;color:#9ba0ab">THD (C...</div><svg class="a" style="left:0;top:0" width="1920" height="1079"><path d="M1546 577.5 H1556" stroke="#8a8a8a" stroke-width="1" shape-rendering="crispEdges"/><rect x="1595.5" y="572.5" width="9" height="9" fill="none" stroke="#8a8a8a" stroke-width="1" shape-rendering="crispEdges"/><path d="M1645 572 L1655 582 M1655 572 L1645 582" stroke="#8a8a8a" stroke-width="1"/></svg><svg class="a" style="left:1443px;top:594px" width="232" height="46"><text x="16.54" y="33.80" font-family="Liberation Mono" font-size="35.0" fill="#00ffff" stroke="#00ffff" stroke-width="0.9" textLength="212.76" lengthAdjust="spacingAndGlyphs" xml:space="preserve">0.01198  </text><ellipse cx="28.36" cy="21.77" rx="3.83" ry="5.2" fill="#000"/><ellipse cx="75.64" cy="21.77" rx="3.83" ry="5.2" fill="#000"/><circle cx="217.3" cy="15.8" r="4.2" fill="none" stroke="#00ffff" stroke-width="2.8"/><circle cx="222.5" cy="28.0" r="4.3" fill="none" stroke="#00ffff" stroke-width="2.8"/><path d="M211.2 24.0 Q219.9 23.0 228.7 20.0" fill="none" stroke="#00ffff" stroke-width="2.6" stroke-linecap="round"/></svg><div class="a" style="left:1680px;top:563px;width:232px;height:78px;background:#fff;box-shadow:0 0 0 1px #9a9a9a, 1px 3px 8px rgba(0,0,0,0.45)"></div><div class="a" style="left:1680px;top:595px;width:232px;height:46px;background:#000"></div><svg class="a" style="left:0;top:0" width="1920" height="1079"><path d="M1689.5 571.5 h2.5 l1 1 v4 l-1 1 h-2.5 z" fill="none" stroke="#0000ff" stroke-width="1.1"/><path d="M1694.5 571.5 h2.5 l1 1 v4 l-1 1 h-2.5 z" fill="none" stroke="#ff0000" stroke-width="1.1"/><path d="M1699.5 577.5 v-6 h2.5 l1 1 v1.5 l-1 1 h-2.5" fill="none" stroke="#00ee00" stroke-width="1.1"/><circle cx="1695.5" cy="581.5" r="3" fill="none" stroke="#000" stroke-width="1.2"/><path d="M1694 581.5 H1697 M1695.5 580 V583" stroke="#000" stroke-width="1"/><path d="M1697.8 583.8 L1700 586" stroke="#000" stroke-width="1.3"/></svg><div class="t" style="left:1709px;top:573px;font-size:12.5px;color:#9ba0ab">THD_B</div><svg class="a" style="left:0;top:0" width="1920" height="1079"><path d="M1783 578.5 H1793" stroke="#8a8a8a" stroke-width="1" shape-rendering="crispEdges"/><rect x="1832.5" y="573.5" width="9" height="9" fill="none" stroke="#8a8a8a" stroke-width="1" shape-rendering="crispEdges"/><path d="M1882 573 L1892 583 M1892 573 L1882 583" stroke="#8a8a8a" stroke-width="1"/></svg><svg class="a" style="left:1680px;top:595px" width="232" height="46"><text x="16.38" y="34.05" font-family="Liberation Mono" font-size="35.0" fill="#ffff00" stroke="#ffff00" stroke-width="0.9" textLength="213.42" lengthAdjust="spacingAndGlyphs" xml:space="preserve">0.00004  </text><ellipse cx="28.24" cy="22.02" rx="3.84" ry="5.2" fill="#000"/><ellipse cx="75.66" cy="22.02" rx="3.84" ry="5.2" fill="#000"/><ellipse cx="99.37" cy="22.02" rx="3.84" ry="5.2" fill="#000"/><ellipse cx="123.09" cy="22.02" rx="3.84" ry="5.2" fill="#000"/><ellipse cx="146.80" cy="22.02" rx="3.84" ry="5.2" fill="#000"/><circle cx="217.8" cy="16.1" r="4.2" fill="none" stroke="#ffff00" stroke-width="2.8"/><circle cx="223.0" cy="28.2" r="4.3" fill="none" stroke="#ffff00" stroke-width="2.8"/><path d="M211.7 24.2 Q220.4 23.2 229.2 20.2" fill="none" stroke="#ffff00" stroke-width="2.6" stroke-linecap="round"/></svg><div class="a" style="left:1443px;top:650px;width:232px;height:78px;background:#fff;box-shadow:0 0 0 1px #9a9a9a, 1px 3px 8px rgba(0,0,0,0.45)"></div><div class="a" style="left:1443px;top:682px;width:232px;height:46px;background:#000"></div><svg class="a" style="left:0;top:0" width="1920" height="1079"><path d="M1452.5 658.5 h2.5 l1 1 v4 l-1 1 h-2.5 z" fill="none" stroke="#0000ff" stroke-width="1.1"/><path d="M1457.5 658.5 h2.5 l1 1 v4 l-1 1 h-2.5 z" fill="none" stroke="#ff0000" stroke-width="1.1"/><path d="M1462.5 664.5 v-6 h2.5 l1 1 v1.5 l-1 1 h-2.5" fill="none" stroke="#00ee00" stroke-width="1.1"/><circle cx="1458.5" cy="668.5" r="3" fill="none" stroke="#000" stroke-width="1.2"/><path d="M1457 668.5 H1460 M1458.5 667 V670" stroke="#000" stroke-width="1"/><path d="M1460.8 670.8 L1463 673" stroke="#000" stroke-width="1.3"/></svg><div class="t" style="left:1472px;top:660px;font-size:12.5px;color:#9ba0ab">THD+...</div><svg class="a" style="left:0;top:0" width="1920" height="1079"><path d="M1546 665.5 H1556" stroke="#8a8a8a" stroke-width="1" shape-rendering="crispEdges"/><rect x="1595.5" y="660.5" width="9" height="9" fill="none" stroke="#8a8a8a" stroke-width="1" shape-rendering="crispEdges"/><path d="M1645 660 L1655 670 M1655 660 L1645 670" stroke="#8a8a8a" stroke-width="1"/></svg><svg class="a" style="left:1443px;top:682px" width="232" height="46"><text x="24.32" y="34.00" font-family="Liberation Mono" font-size="35.0" fill="#00ffff" stroke="#00ffff" stroke-width="0.9" textLength="205.06" lengthAdjust="spacingAndGlyphs" xml:space="preserve">2.14153  </text><circle cx="217.4" cy="16.0" r="4.2" fill="none" stroke="#00ffff" stroke-width="2.8"/><circle cx="222.6" cy="28.2" r="4.3" fill="none" stroke="#00ffff" stroke-width="2.8"/><path d="M211.3 24.2 Q220.0 23.2 228.8 20.2" fill="none" stroke="#00ffff" stroke-width="2.6" stroke-linecap="round"/></svg><div class="a" style="left:1680px;top:651px;width:232px;height:78px;background:#fff;box-shadow:0 0 0 1px #9a9a9a, 1px 3px 8px rgba(0,0,0,0.45)"></div><div class="a" style="left:1680px;top:683px;width:232px;height:46px;background:#000"></div><svg class="a" style="left:0;top:0" width="1920" height="1079"><path d="M1689.5 659.5 h2.5 l1 1 v4 l-1 1 h-2.5 z" fill="none" stroke="#0000ff" stroke-width="1.1"/><path d="M1694.5 659.5 h2.5 l1 1 v4 l-1 1 h-2.5 z" fill="none" stroke="#ff0000" stroke-width="1.1"/><path d="M1699.5 665.5 v-6 h2.5 l1 1 v1.5 l-1 1 h-2.5" fill="none" stroke="#00ee00" stroke-width="1.1"/><circle cx="1695.5" cy="669.5" r="3" fill="none" stroke="#000" stroke-width="1.2"/><path d="M1694 669.5 H1697 M1695.5 668 V671" stroke="#000" stroke-width="1"/><path d="M1697.8 671.8 L1700 674" stroke="#000" stroke-width="1.3"/></svg><div class="t" style="left:1709px;top:661px;font-size:12.5px;color:#9ba0ab">THD+...</div><svg class="a" style="left:0;top:0" width="1920" height="1079"><path d="M1783 666.5 H1793" stroke="#8a8a8a" stroke-width="1" shape-rendering="crispEdges"/><rect x="1832.5" y="661.5" width="9" height="9" fill="none" stroke="#8a8a8a" stroke-width="1" shape-rendering="crispEdges"/><path d="M1882 661 L1892 671 M1892 661 L1882 671" stroke="#8a8a8a" stroke-width="1"/></svg><svg class="a" style="left:1680px;top:683px" width="232" height="46"><text x="24.72" y="33.90" font-family="Liberation Mono" font-size="35.0" fill="#ffff00" stroke="#ffff00" stroke-width="0.9" textLength="204.96" lengthAdjust="spacingAndGlyphs" xml:space="preserve">0.00232  </text><ellipse cx="36.11" cy="21.88" rx="3.69" ry="5.2" fill="#000"/><ellipse cx="81.66" cy="21.88" rx="3.69" ry="5.2" fill="#000"/><ellipse cx="104.43" cy="21.88" rx="3.69" ry="5.2" fill="#000"/><circle cx="217.7" cy="15.9" r="4.2" fill="none" stroke="#ffff00" stroke-width="2.8"/><circle cx="222.9" cy="28.1" r="4.3" fill="none" stroke="#ffff00" stroke-width="2.8"/><path d="M211.6 24.1 Q220.3 23.1 229.1 20.1" fill="none" stroke="#ffff00" stroke-width="2.6" stroke-linecap="round"/></svg><div class="a" style="left:1443px;top:739px;width:232px;height:77px;background:#fff;box-shadow:0 0 0 1px #9a9a9a, 1px 3px 8px rgba(0,0,0,0.45)"></div><div class="a" style="left:1443px;top:771px;width:232px;height:45px;background:#000"></div><svg class="a" style="left:0;top:0" width="1920" height="1079"><path d="M1452.5 747.5 h2.5 l1 1 v4 l-1 1 h-2.5 z" fill="none" stroke="#0000ff" stroke-width="1.1"/><path d="M1457.5 747.5 h2.5 l1 1 v4 l-1 1 h-2.5 z" fill="none" stroke="#ff0000" stroke-width="1.1"/><path d="M1462.5 753.5 v-6 h2.5 l1 1 v1.5 l-1 1 h-2.5" fill="none" stroke="#00ee00" stroke-width="1.1"/><circle cx="1458.5" cy="757.5" r="3" fill="none" stroke="#000" stroke-width="1.2"/><path d="M1457 757.5 H1460 M1458.5 756 V759" stroke="#000" stroke-width="1"/><path d="M1460.8 759.8 L1463 762" stroke="#000" stroke-width="1.3"/></svg><div class="t" style="left:1472px;top:749px;font-size:12.5px;color:#9ba0ab">SNR (C...</div><svg class="a" style="left:0;top:0" width="1920" height="1079"><path d="M1546 754.5 H1556" stroke="#8a8a8a" stroke-width="1" shape-rendering="crispEdges"/><rect x="1595.5" y="749.5" width="9" height="9" fill="none" stroke="#8a8a8a" stroke-width="1" shape-rendering="crispEdges"/><path d="M1645 749 L1655 759 M1655 749 L1645 759" stroke="#8a8a8a" stroke-width="1"/></svg><svg class="a" style="left:1443px;top:771px" width="232" height="45"><text x="8.95" y="34.30" font-family="Liberation Mono" font-size="35.0" fill="#00ffff" stroke="#00ffff" stroke-width="0.9" textLength="223.85" lengthAdjust="spacingAndGlyphs" xml:space="preserve">33.38 dB</text></svg><div class="a" style="left:1680px;top:739px;width:232px;height:77px;background:#fff;box-shadow:0 0 0 1px #9a9a9a, 1px 3px 8px rgba(0,0,0,0.45)"></div><div class="a" style="left:1680px;top:771px;width:232px;height:45px;background:#000"></div><svg class="a" style="left:0;top:0" width="1920" height="1079"><path d="M1689.5 747.5 h2.5 l1 1 v4 l-1 1 h-2.5 z" fill="none" stroke="#0000ff" stroke-width="1.1"/><path d="M1694.5 747.5 h2.5 l1 1 v4 l-1 1 h-2.5 z" fill="none" stroke="#ff0000" stroke-width="1.1"/><path d="M1699.5 753.5 v-6 h2.5 l1 1 v1.5 l-1 1 h-2.5" fill="none" stroke="#00ee00" stroke-width="1.1"/><circle cx="1695.5" cy="757.5" r="3" fill="none" stroke="#000" stroke-width="1.2"/><path d="M1694 757.5 H1697 M1695.5 756 V759" stroke="#000" stroke-width="1"/><path d="M1697.8 759.8 L1700 762" stroke="#000" stroke-width="1.3"/></svg><div class="t" style="left:1709px;top:749px;font-size:12.5px;color:#9ba0ab">SNR (C...</div><svg class="a" style="left:0;top:0" width="1920" height="1079"><path d="M1783 754.5 H1793" stroke="#8a8a8a" stroke-width="1" shape-rendering="crispEdges"/><rect x="1832.5" y="749.5" width="9" height="9" fill="none" stroke="#8a8a8a" stroke-width="1" shape-rendering="crispEdges"/><path d="M1882 749 L1892 759 M1892 749 L1882 759" stroke="#8a8a8a" stroke-width="1"/></svg><svg class="a" style="left:1680px;top:771px" width="232" height="45"><text x="41.12" y="34.30" font-family="Liberation Mono" font-size="35.0" fill="#ffff00" stroke="#ffff00" stroke-width="0.9" textLength="190.68" lengthAdjust="spacingAndGlyphs" xml:space="preserve">92.69 dB</text></svg><div class="a" style="left:1443px;top:825px;width:232px;height:78px;background:#fff;box-shadow:0 0 0 1px #9a9a9a, 1px 3px 8px rgba(0,0,0,0.45)"></div><div class="a" style="left:1443px;top:857px;width:232px;height:46px;background:#000"></div><svg class="a" style="left:0;top:0" width="1920" height="1079"><path d="M1452.5 833.5 h2.5 l1 1 v4 l-1 1 h-2.5 z" fill="none" stroke="#0000ff" stroke-width="1.1"/><path d="M1457.5 833.5 h2.5 l1 1 v4 l-1 1 h-2.5 z" fill="none" stroke="#ff0000" stroke-width="1.1"/><path d="M1462.5 839.5 v-6 h2.5 l1 1 v1.5 l-1 1 h-2.5" fill="none" stroke="#00ee00" stroke-width="1.1"/><circle cx="1458.5" cy="843.5" r="3" fill="none" stroke="#000" stroke-width="1.2"/><path d="M1457 843.5 H1460 M1458.5 842 V845" stroke="#000" stroke-width="1"/><path d="M1460.8 845.8 L1463 848" stroke="#000" stroke-width="1.3"/></svg><div class="t" style="left:1472px;top:835px;font-size:12.5px;color:#9ba0ab">SINAD ...</div><svg class="a" style="left:0;top:0" width="1920" height="1079"><path d="M1546 840.5 H1556" stroke="#8a8a8a" stroke-width="1" shape-rendering="crispEdges"/><rect x="1595.5" y="835.5" width="9" height="9" fill="none" stroke="#8a8a8a" stroke-width="1" shape-rendering="crispEdges"/><path d="M1645 835 L1655 845 M1655 835 L1645 845" stroke="#8a8a8a" stroke-width="1"/></svg><svg class="a" style="left:1443px;top:857px" width="232" height="46"><text x="7.69" y="34.30" font-family="Liberation Mono" font-size="35.0" fill="#00ffff" stroke="#00ffff" stroke-width="0.9" textLength="224.41" lengthAdjust="spacingAndGlyphs" xml:space="preserve">33.39 dB</text></svg><div class="a" style="left:1680px;top:826px;width:232px;height:79px;background:#fff;box-shadow:0 0 0 1px #9a9a9a, 1px 3px 8px rgba(0,0,0,0.45)"></div><div class="a" style="left:1680px;top:859px;width:232px;height:46px;background:#000"></div><svg class="a" style="left:0;top:0" width="1920" height="1079"><path d="M1689.5 834.5 h2.5 l1 1 v4 l-1 1 h-2.5 z" fill="none" stroke="#0000ff" stroke-width="1.1"/><path d="M1694.5 834.5 h2.5 l1 1 v4 l-1 1 h-2.5 z" fill="none" stroke="#ff0000" stroke-width="1.1"/><path d="M1699.5 840.5 v-6 h2.5 l1 1 v1.5 l-1 1 h-2.5" fill="none" stroke="#00ee00" stroke-width="1.1"/><circle cx="1695.5" cy="844.5" r="3" fill="none" stroke="#000" stroke-width="1.2"/><path d="M1694 844.5 H1697 M1695.5 843 V846" stroke="#000" stroke-width="1"/><path d="M1697.8 846.8 L1700 849" stroke="#000" stroke-width="1.3"/></svg><div class="t" style="left:1709px;top:836px;font-size:12.5px;color:#9ba0ab">SINAD ...</div><svg class="a" style="left:0;top:0" width="1920" height="1079"><path d="M1783 841.5 H1793" stroke="#8a8a8a" stroke-width="1" shape-rendering="crispEdges"/><rect x="1832.5" y="836.5" width="9" height="9" fill="none" stroke="#8a8a8a" stroke-width="1" shape-rendering="crispEdges"/><path d="M1882 836 L1892 846 M1892 836 L1882 846" stroke="#8a8a8a" stroke-width="1"/></svg><svg class="a" style="left:1680px;top:859px" width="232" height="46"><text x="8.81" y="34.10" font-family="Liberation Mono" font-size="35.0" fill="#ffff00" stroke="#ffff00" stroke-width="0.9" textLength="223.59" lengthAdjust="spacingAndGlyphs" xml:space="preserve">92.69 dB</text></svg><div class="a" style="left:1443px;top:916px;width:232px;height:77px;background:#fff;box-shadow:0 0 0 1px #9a9a9a, 1px 3px 8px rgba(0,0,0,0.45)"></div><div class="a" style="left:1443px;top:948px;width:232px;height:45px;background:#000"></div><svg class="a" style="left:0;top:0" width="1920" height="1079"><path d="M1452.5 924.5 h2.5 l1 1 v4 l-1 1 h-2.5 z" fill="none" stroke="#0000ff" stroke-width="1.1"/><path d="M1457.5 924.5 h2.5 l1 1 v4 l-1 1 h-2.5 z" fill="none" stroke="#ff0000" stroke-width="1.1"/><path d="M1462.5 930.5 v-6 h2.5 l1 1 v1.5 l-1 1 h-2.5" fill="none" stroke="#00ee00" stroke-width="1.1"/><circle cx="1458.5" cy="934.5" r="3" fill="none" stroke="#000" stroke-width="1.2"/><path d="M1457 934.5 H1460 M1458.5 933 V936" stroke="#000" stroke-width="1"/><path d="M1460.8 936.8 L1463 939" stroke="#000" stroke-width="1.3"/></svg><div class="t" style="left:1472px;top:926px;font-size:12.5px;color:#9ba0ab">ENOB (...</div><svg class="a" style="left:0;top:0" width="1920" height="1079"><path d="M1546 931.5 H1556" stroke="#8a8a8a" stroke-width="1" shape-rendering="crispEdges"/><rect x="1595.5" y="926.5" width="9" height="9" fill="none" stroke="#8a8a8a" stroke-width="1" shape-rendering="crispEdges"/><path d="M1645 926 L1655 936 M1655 926 L1645 936" stroke="#8a8a8a" stroke-width="1"/></svg><svg class="a" style="left:1443px;top:948px" width="232" height="45"><text x="40.56" y="33.70" font-family="Liberation Mono" font-size="35.0" fill="#00ffff" stroke="#00ffff" stroke-width="0.9" textLength="195.52" lengthAdjust="spacingAndGlyphs" xml:space="preserve">5.25 Bit</text></svg><div class="a" style="left:1680px;top:915px;width:232px;height:78px;background:#fff;box-shadow:0 0 0 1px #9a9a9a, 1px 3px 8px rgba(0,0,0,0.45)"></div><div class="a" style="left:1680px;top:947px;width:232px;height:46px;background:#000"></div><svg class="a" style="left:0;top:0" width="1920" height="1079"><path d="M1689.5 923.5 h2.5 l1 1 v4 l-1 1 h-2.5 z" fill="none" stroke="#0000ff" stroke-width="1.1"/><path d="M1694.5 923.5 h2.5 l1 1 v4 l-1 1 h-2.5 z" fill="none" stroke="#ff0000" stroke-width="1.1"/><path d="M1699.5 929.5 v-6 h2.5 l1 1 v1.5 l-1 1 h-2.5" fill="none" stroke="#00ee00" stroke-width="1.1"/><circle cx="1695.5" cy="933.5" r="3" fill="none" stroke="#000" stroke-width="1.2"/><path d="M1694 933.5 H1697 M1695.5 932 V935" stroke="#000" stroke-width="1"/><path d="M1697.8 935.8 L1700 938" stroke="#000" stroke-width="1.3"/></svg><div class="t" style="left:1709px;top:925px;font-size:12.5px;color:#9ba0ab">ENOB (...</div><svg class="a" style="left:0;top:0" width="1920" height="1079"><path d="M1783 930.5 H1793" stroke="#8a8a8a" stroke-width="1" shape-rendering="crispEdges"/><rect x="1832.5" y="925.5" width="9" height="9" fill="none" stroke="#8a8a8a" stroke-width="1" shape-rendering="crispEdges"/><path d="M1882 925 L1892 935 M1892 925 L1882 935" stroke="#8a8a8a" stroke-width="1"/></svg><svg class="a" style="left:1680px;top:947px" width="232" height="46"><text x="14.25" y="34.20" font-family="Liberation Mono" font-size="35.0" fill="#ffff00" stroke="#ffff00" stroke-width="0.9" textLength="220.84" lengthAdjust="spacingAndGlyphs" xml:space="preserve">15.10 Bit</text><ellipse cx="124.67" cy="22.17" rx="3.97" ry="5.2" fill="#000"/></svg><div class="a" style="left:1675px;top:1001px;width:243px;height:59px;background:#f0f0f0;box-shadow:0 0 0 1px #9a9a9a, 1px 2px 6px rgba(0,0,0,0.3)"></div><div class="a" style="left:1675px;top:1001px;width:243px;height:28px;background:#fff"></div><svg class="a" style="left:1678px;top:1007px" width="17" height="17"><rect width="16" height="16" fill="#ffff00"/><path d="M0 4 h2 v-3 h4 v3 h4 v-3 h4 v3 h2" fill="none" stroke="#ff0000"/><path d="M0 9 h2 v-3 h4 v3 h4 v-3 h4 v3 h2" fill="none" stroke="#00aa00"/><path d="M0 15 l2.7 -4 l2.7 4 l2.7 -4 l2.7 4 l2.7 -4 l2.7 4" fill="none" stroke="#0000ff"/></svg><div class="t" style="left:1699px;top:1009px;font-size:12.5px;color:#9ba0ab">Signal Ge...</div><svg class="a" style="left:0;top:0" width="1920" height="1079"><path d="M1788 1015.5 H1798" stroke="#707070" stroke-width="1" shape-rendering="crispEdges"/><rect x="1837.5" y="1010.5" width="9" height="9" fill="none" stroke="#d0d0d0" stroke-width="1" shape-rendering="crispEdges"/><path d="M1886 1010 L1896 1020 M1896 1010 L1886 1020" stroke="#707070" stroke-width="1"/></svg><div class="a" style="left:1681px;top:1037px;width:12px;height:12px;background:#fff;border:1px solid #333"></div><div class="t" style="left:1699px;top:1039px;font-size:11px;letter-spacing:-0.2px;color:#000">Show Editor</div><div class="cb" style="left:1762px;top:1034px;width:126px;height:21px"><div class="t" style="left:3px;top:5.75px;font-size:11.5px;color:#000">No Loopback</div><div class="dd"></div></div><div class="a" style="left:1890px;top:1033px;width:24px;height:22px;background:#e8e8e8;border:1px solid #a0a0a0"></div><svg class="a" style="left:1890px;top:1033px" width="24" height="22"><path d="M8 6 L17 11 L8 16 Z" fill="#ff0000"/></svg><div class="a" style="left:4px;top:1057px;width:27px;height:22px;background:#f0f0f0;border-left:1px solid #fff;border-right:1px solid #c0c0c0"></div><div class="t" style="left:4px;top:1062px;width:27px;text-align:center;font-size:13px;color:#000">T</div><div class="cb" style="left:32px;top:1057px;width:182px;height:22px"><div class="t" style="left:3px;top:5.5px;font-size:13px;color:#000">2s</div><div class="dd"></div></div><div class="cb" style="left:218px;top:1057px;width:155px;height:22px"><div class="t" style="left:3px;top:5.5px;font-size:13px;color:#000">×500</div><div class="dd"></div></div><div class="a" style="left:373px;top:1057px;width:26px;height:22px;background:#f0f0f0;border-left:1px solid #fff;border-right:1px solid #c0c0c0"></div><div class="t" style="left:373px;top:1062px;width:26px;text-align:center;font-size:13px;color:#000">A</div><div class="cbk" style="left:400px;top:1057px;width:176px;height:22px"><div class="t" style="left:3px;top:5.5px;font-size:13px;color:#00ffff">±2mV</div><div class="dd"></div></div><div class="cbk" style="left:580px;top:1057px;width:146px;height:22px"><div class="t" style="left:3px;top:5.5px;font-size:13px;color:#00ffff">Off</div><div class="dd"></div></div><div class="a" style="left:726px;top:1057px;width:26px;height:22px;background:#f0f0f0;border-left:1px solid #fff;border-right:1px solid #c0c0c0"></div><div class="t" style="left:726px;top:1062px;width:26px;text-align:center;font-size:13px;color:#000">M</div><div class="cb" style="left:752px;top:1057px;width:130px;height:22px"><div class="t" style="left:3px;top:5.5px;font-size:13px;color:#000">A&amp;B</div><div class="dd"></div></div><div class="a" style="left:882px;top:1057px;width:24px;height:22px;background:#f0f0f0;border-left:1px solid #fff;border-right:1px solid #c0c0c0"></div><div class="t" style="left:882px;top:1062px;width:24px;text-align:center;font-size:13px;color:#000">B</div><div class="cbk" style="left:906px;top:1057px;width:177px;height:22px"><div class="t" style="left:3px;top:5.5px;font-size:13px;color:#ffff00">±2V</div><div class="dd"></div></div><div class="cbk" style="left:1086px;top:1057px;width:148px;height:22px"><div class="t" style="left:3px;top:5.5px;font-size:13px;color:#ffff00">Off</div><div class="dd"></div></div></body></html>
